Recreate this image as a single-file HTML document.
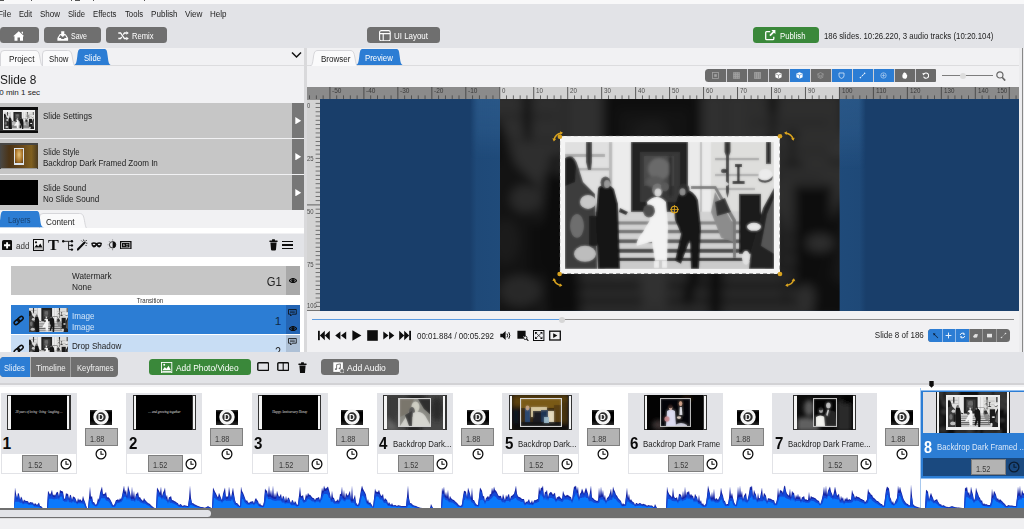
<!DOCTYPE html>
<html lang="en"><head><meta charset="utf-8"><title>Slideshow editor</title><style>
html,body{margin:0;padding:0;}
body{width:1024px;height:529px;overflow:hidden;background:#e2e3e7;font-family:"Liberation Sans", sans-serif;position:relative;}
#app{position:absolute;left:0;top:0;width:1024px;height:529px;overflow:hidden;}
#app div,#app svg,#app .t{position:absolute;box-sizing:border-box;}
#app .t{white-space:nowrap;display:block;}
#app .t span{position:static;}
</style></head><body><div id="app"><div style="left:0px;top:0px;width:1024px;height:4px;background:#f8f8f9;"></div><div style="left:0px;top:0px;width:4px;height:0.8px;background:#555;"></div><div style="left:31px;top:0px;width:1.2px;height:0.8px;background:#555;"></div><div style="left:71px;top:0px;width:1.2px;height:0.8px;background:#555;"></div><div style="left:75px;top:0px;width:5px;height:0.8px;background:#555;"></div><div style="left:93px;top:0px;width:1.2px;height:0.8px;background:#555;"></div><div style="left:144px;top:0px;width:1.2px;height:0.8px;background:#555;"></div><span class="t" style="top:8.84px;font-size:8.4px;line-height:10.92px;color:#1c1c1c;transform:scaleX(0.978);transform-origin:left center;left:-2.2px;">File</span><span class="t" style="top:8.84px;font-size:8.4px;line-height:10.92px;color:#1c1c1c;transform:scaleX(0.900);transform-origin:left center;left:19px;">Edit</span><span class="t" style="top:8.84px;font-size:8.4px;line-height:10.92px;color:#1c1c1c;transform:scaleX(0.955);transform-origin:left center;left:40px;">Show</span><span class="t" style="top:8.84px;font-size:8.4px;line-height:10.92px;color:#1c1c1c;transform:scaleX(0.913);transform-origin:left center;left:68px;">Slide</span><span class="t" style="top:8.84px;font-size:8.4px;line-height:10.92px;color:#1c1c1c;transform:scaleX(0.923);transform-origin:left center;left:93px;">Effects</span><span class="t" style="top:8.84px;font-size:8.4px;line-height:10.92px;color:#1c1c1c;transform:scaleX(0.920);transform-origin:left center;left:125px;">Tools</span><span class="t" style="top:8.84px;font-size:8.4px;line-height:10.92px;color:#1c1c1c;transform:scaleX(0.965);transform-origin:left center;left:150.5px;">Publish</span><span class="t" style="top:8.84px;font-size:8.4px;line-height:10.92px;color:#1c1c1c;transform:scaleX(0.971);transform-origin:left center;left:184.5px;">View</span><span class="t" style="top:8.84px;font-size:8.4px;line-height:10.92px;color:#1c1c1c;transform:scaleX(0.957);transform-origin:left center;left:209.5px;">Help</span><div style="left:0px;top:27px;width:39px;height:16.3px;background:#6f6f6f;border-radius:3.5px;"></div><div style="left:44px;top:27px;width:56.5px;height:16.3px;background:#6f6f6f;border-radius:3.5px;"></div><div style="left:105.5px;top:27px;width:61px;height:16.3px;background:#6f6f6f;border-radius:3.5px;"></div><div style="left:367px;top:27px;width:73px;height:16.3px;background:#6f6f6f;border-radius:3.5px;"></div><div style="left:752.6px;top:27px;width:66.4px;height:16.3px;background:#3a883a;border-radius:3.5px;"></div><svg style="left:12.5px;top:30.5px;" width="11.5" height="10" viewBox="0 0 11.5 10"><path d="M5.75 0.3 L11.3 5.2 L10 5.2 L10 9.8 L7 9.8 L7 6.5 L4.5 6.5 L4.5 9.8 L1.5 9.8 L1.5 5.2 L0.2 5.2 Z M8.6 0.8 h1.4 v2.2 l-1.4 -1.2z" fill="#fff"/></svg><svg style="left:57px;top:30.5px;" width="11.5" height="10" viewBox="0 0 11.5 10"><path d="M4.2 0.3 h3.1 v2.6 h1.9 L5.75 6 L2.3 2.9 h1.9z" fill="#fff"/><path d="M2.6 3.6 L0.4 6.9 V9.7 H11.1 V6.9 L8.9 3.6 L8.1 4.3 L9.7 6.9 H7.6 L7 8 H4.5 L3.9 6.9 H1.8 L3.4 4.3z" fill="#fff"/></svg><span class="t" style="top:30.94px;font-size:8.4px;line-height:10.92px;color:#fff;transform:scaleX(0.838);transform-origin:left center;left:71.4px;">Save</span><svg style="left:118px;top:31px;" width="11" height="9.5" viewBox="0 0 11 9.5"><path d="M0.3 2 H2.6 L6.4 7.5 H8.6 M0.3 7.5 H2.6 L3.7 5.9 M5.3 3.6 L6.4 2 H8.6" fill="none" stroke="#fff" stroke-width="1.3"/><path d="M8.3 0.2 L10.8 2 L8.3 3.8z M8.3 5.7 L10.8 7.5 L8.3 9.3z" fill="#fff"/></svg><span class="t" style="top:30.94px;font-size:8.4px;line-height:10.92px;color:#fff;transform:scaleX(0.906);transform-origin:left center;left:132.4px;">Remix</span><svg style="left:379px;top:29.7px;" width="12" height="11.5" viewBox="0 0 12 11.5"><rect x="0.6" y="0.6" width="10.6" height="10.2" rx="1.6" fill="none" stroke="#fff" stroke-width="1.1"/><path d="M0.6 3.6 H11.2 M4.2 3.6 V10.8" stroke="#fff" stroke-width="1.1" fill="none"/></svg><span class="t" style="top:30.94px;font-size:8.4px;line-height:10.92px;color:#fff;transform:scaleX(0.948);transform-origin:left center;left:393.7px;">UI Layout</span><svg style="left:765px;top:30.3px;" width="10.5" height="10.5" viewBox="0 0 10.5 10.5"><path d="M5.2 1.6 H1.6 Q0.7 1.6 0.7 2.5 V8.8 Q0.7 9.7 1.6 9.7 H7.9 Q8.8 9.7 8.8 8.8 V6.8" fill="none" stroke="#fff" stroke-width="1.3"/><path d="M6.4 0 H10.4 V4 L9 2.7 L5.6 6.2 L4.3 4.9 L7.8 1.4z" fill="#fff"/></svg><span class="t" style="top:30.94px;font-size:8.4px;line-height:10.92px;color:#fff;transform:scaleX(0.928);transform-origin:left center;left:780px;">Publish</span><span class="t" style="top:30.94px;font-size:8.4px;line-height:10.92px;color:#222;transform:scaleX(0.933);transform-origin:left center;left:824px;">186 slides. 10:26.220, 3 audio tracks (10:20.104)</span><div style="left:0px;top:47.5px;width:304px;height:304.5px;background:#f1f1f3;"></div><div style="left:0px;top:65px;width:304px;height:1px;background:#dcdcde;"></div><div style="left:304px;top:47.5px;width:3px;height:304.5px;background:#d9d9db;"></div><div style="left:307px;top:47.5px;width:713px;height:304.5px;background:#f1f1f3;"></div><div style="left:307px;top:65px;width:713px;height:1px;background:#dcdcde;"></div><div style="left:1019.3px;top:47.5px;width:4.7px;height:304.5px;background:#ececee;"></div><div style="left:1021.6px;top:47.5px;width:1.6px;height:304px;background:#888888;"></div><svg style="left:0px;top:49.5px;" width="43" height="16" viewBox="0 0 43 16"><path d="M0.5 16.0 V4 Q0.5 0.5 4 0.5 H35 C38 0.5 39 2 40 8.0 C41 14.0 41.5 16.0 43 16.0" fill="#fafafb" stroke="#d2d2d6" stroke-width="0.9"/></svg><span class="t" style="top:53.74px;font-size:8.4px;line-height:10.92px;color:#222;transform:scaleX(0.978);transform-origin:left center;left:8.6px;">Project</span><svg style="left:41.5px;top:49.5px;" width="33.5" height="16" viewBox="0 0 33.5 16"><path d="M0.5 16.0 V4 Q0.5 0.5 4 0.5 H25.5 C28.5 0.5 29.5 2 30.5 8.0 C31.5 14.0 32.0 16.0 33.5 16.0" fill="#fafafb" stroke="#d2d2d6" stroke-width="0.9"/></svg><span class="t" style="top:53.74px;font-size:8.4px;line-height:10.92px;color:#222;transform:scaleX(0.931);transform-origin:left center;left:48.7px;">Show</span><svg style="left:72.6px;top:48.5px;" width="39" height="16" viewBox="0 0 39 16"><path d="M0 16.0 C3 16.0 3.5 14.0 4.3 7.2 C5 1.2 5.5 0 8 0 H31.0 C33.5 0 34.0 1.2 34.7 7.2 C35.5 14.0 36.0 16.0 39.0 16.0 Z" fill="#2c7dd4"/></svg><span class="t" style="top:52.74px;font-size:8.4px;line-height:10.92px;color:#fff;transform:scaleX(0.913);transform-origin:left center;left:83.6px;">Slide</span><svg style="left:291px;top:51px;" width="11" height="8" viewBox="0 0 11 8"><path d="M1 1.5 L5.5 6 L10 1.5" fill="none" stroke="#111" stroke-width="1.5"/></svg><svg width="0" height="0" style="left:0;top:0"><defs>
<filter id="b1" x="-10%" y="-10%" width="120%" height="120%"><feGaussianBlur stdDeviation="0.9"/></filter>
<filter id="b3" x="-20%" y="-20%" width="140%" height="140%"><feGaussianBlur stdDeviation="2"/></filter>
<filter id="b8" x="-10%" y="-10%" width="120%" height="120%"><feGaussianBlur stdDeviation="5"/></filter>
<g id="photoraw">
<rect x="0" y="0" width="209" height="127" fill="#c4c4c4"/>
<g>
<rect x="0" y="0" width="66" height="72" fill="#e0e0e0"/>
<rect x="0" y="12" width="40" height="3" fill="#a9a9a9"/>
<rect x="8" y="26" width="36" height="2.5" fill="#b4b4b4"/>
<rect x="44" y="0" width="3" height="70" fill="#b9b9b9"/>
<rect x="48" y="0" width="17" height="70" fill="#ececec"/>
<rect x="123" y="0" width="26" height="74" fill="#ebebeb"/>
<rect x="135" y="0" width="2" height="70" fill="#bdbdbd"/>
<rect x="146" y="0" width="63" height="70" fill="#dededc"/>
<rect x="150" y="16" width="44" height="2.2" fill="#a6a6a6"/>
<rect x="150" y="32" width="44" height="2.2" fill="#adadad"/>
<rect x="150" y="46" width="40" height="2.2" fill="#b0b0b0"/>
<rect x="201" y="0" width="5" height="22" fill="#2e2e2e"/>
<rect x="0" y="70" width="209" height="57" fill="#b4b4b4"/>
<rect x="50" y="70" width="144" height="50" fill="#d2d2d2"/>
<rect x="52" y="79.5" width="140" height="3.2" fill="#858585"/>
<rect x="52" y="88" width="140" height="3.4" fill="#707070"/>
<rect x="52" y="97.5" width="140" height="3.8" fill="#5a5a5a"/>
<rect x="52" y="107" width="140" height="4" fill="#454545"/>
<rect x="48" y="116" width="146" height="3.2" fill="#303030"/>
<rect x="40" y="119.4" width="160" height="8" fill="#cbcbcb"/>
<rect x="66" y="0" width="57" height="70" fill="#232323"/>
<rect x="75" y="10" width="40" height="50" fill="#383838"/>
<rect x="79" y="14" width="30" height="30" fill="#4c4c4c"/>
<g filter="url(#b1)"><ellipse cx="94" cy="27" rx="11" ry="11" fill="#6a6a6a"/><ellipse cx="90" cy="40" rx="9" ry="6" fill="#5a5a5a"/><rect x="104" y="14" width="3" height="40" fill="#2a2a2a"/></g>
<path d="M21 0 h6 v20 l-1 8 h-3 l-2 -8z" fill="#3a3a3a"/>
<path d="M159.5 0 h6 v10 l-1.5 4 v36 l-1.5 6 l-1.5 -6 v-36 l-1.5 -4z" fill="#333"/>
<ellipse cx="159" cy="29" rx="3" ry="2.2" fill="#3a3a3a"/>
<path d="M126 44 H151 L171 78 V116 H168 V80 L149.5 47 H126z" fill="#777"/>
<path d="M150 50 L168 82 V100 L156 96 L146 70z" fill="#8c8c8c"/>
<path d="M0 16 Q9 10 13 24 L18 40 L30 52 L32 127 L0 127z" fill="#3e3e3e"/>
<path d="M0 16 Q8 12 11 24 L10 40 L0 44z" fill="#1e1e1e"/>
<ellipse cx="23" cy="60" rx="8" ry="7" fill="#c9c9c9"/>
<ellipse cx="12" cy="84" rx="7" ry="12" fill="#6e6e6e"/>
<ellipse cx="20" cy="112" rx="11" ry="8" fill="#bdbdbd"/>
<rect x="24" y="74" width="8" height="30" fill="#1d1d1d"/>
<path d="M33 46 Q41 38 49 47 L53 62 L55 127 L33 127 L31 72z" fill="#151515"/>
<ellipse cx="40.5" cy="40.5" rx="5" ry="6" fill="#4a4a4a"/>
<ellipse cx="42" cy="42" rx="3" ry="4" fill="#9a9a9a"/>
<path d="M55 66 l8 4 l-2 3 l-7 -3z" fill="#222"/>
<path d="M82 60 Q92 50 101 60 L103 84 L102 119 L90 119 L87 100 L72 104 Q70 100 78 90 L85 78z" fill="#f3f3f3"/>
<ellipse cx="92.5" cy="48" rx="5.5" ry="6.5" fill="#777"/>
<ellipse cx="93" cy="50.5" rx="3.4" ry="4" fill="#d8d8d8"/>
<ellipse cx="84" cy="69" rx="6" ry="6.5" fill="#4e4e4e"/>
<rect x="89" y="119" width="5" height="7" fill="#eee"/><rect x="97" y="119" width="5" height="7" fill="#eee"/>
<path d="M115 50 Q126 44 133 58 L136 86 L134 127 L126 127 L125 98 L116 122 L110 119 L116 92 L110 78 Q108 64 115 50z" fill="#181818"/>
<ellipse cx="119" cy="47" rx="5.5" ry="5.5" fill="#2e2e2e"/>
<ellipse cx="117.5" cy="50" rx="3" ry="3.6" fill="#8e8e8e"/>
<ellipse cx="100" cy="45" rx="4" ry="4.5" fill="#5a5a5a"/>
<rect x="174" y="52" width="22" height="60" fill="#1b1b1b"/>
<path d="M209 46 L198 66 L186 108 L184 127 L209 127z" fill="#222"/>
<path d="M209 56 L202 72 L196 104 L209 112z" fill="#575757"/>
<ellipse cx="200.5" cy="33" rx="7" ry="6" fill="#ececec"/>
<path d="M193 36 q8 6 15 -2 l-1 4 q-6 5 -13 1z" fill="#333"/>
<path d="M170 22 h7 v3 h-2.4 v14 h5 v3 h-12 v-3 h4.6 v-14 h-2.2z" fill="#2a2a2a"/>
<ellipse cx="189" cy="85" rx="7" ry="4" fill="#e6e6e6"/>
<ellipse cx="181" cy="116" rx="4" ry="7" fill="#e2e2e2"/>
<path d="M150 60 L160 56 L166 70 L152 74z" fill="#333"/>
<path d="M150 38 q8 -2 14 4 l-2 2 q-6 -4 -12 -3z" fill="#ddd"/>
</g></g>
<g id="photo"><use href="#photoraw" filter="url(#b1)"/><use href="#photoraw" opacity="0.45"/></g>
</defs></svg><span class="t" style="top:71.94px;font-size:12.4px;line-height:16.12px;color:#1c1c1c;transform:scaleX(0.958);transform-origin:left center;left:-0.3px;">Slide 8</span><span class="t" style="top:88.3px;font-size:8px;line-height:10.4px;color:#1c1c1c;left:-0.8px;">0 min 1 sec</span><div style="left:0px;top:102.8px;width:291.5px;height:34.8px;background:#c6c6c6;"></div><div style="left:291.5px;top:102.8px;width:12.5px;height:34.8px;background:#777777;"></div><svg style="left:294.5px;top:116.5px;" width="7" height="7.4" viewBox="0 0 7 7.4"><path d="M0.3 0 L6.2 3.7 L0.3 7.4z" fill="#fff"/></svg><div style="left:0px;top:139.2px;width:291.5px;height:34.6px;background:#c6c6c6;"></div><div style="left:291.5px;top:139.2px;width:12.5px;height:34.6px;background:#777777;"></div><svg style="left:294.5px;top:152.8px;" width="7" height="7.4" viewBox="0 0 7 7.4"><path d="M0.3 0 L6.2 3.7 L0.3 7.4z" fill="#fff"/></svg><div style="left:0px;top:175.2px;width:291.5px;height:34.6px;background:#c6c6c6;"></div><div style="left:291.5px;top:175.2px;width:12.5px;height:34.6px;background:#777777;"></div><svg style="left:294.5px;top:188.8px;" width="7" height="7.4" viewBox="0 0 7 7.4"><path d="M0.3 0 L6.2 3.7 L0.3 7.4z" fill="#fff"/></svg><div style="left:0px;top:107.4px;width:38.3px;height:26px;background:#0c0c0c;"></div><div style="left:0px;top:109.8px;width:38.3px;height:21px;background:#303030;"></div><div style="left:2.8px;top:110.3px;width:32.4px;height:19.6px;background:#f0f0f0;"></div><svg preserveAspectRatio="none" style="left:4px;top:111.6px;overflow:hidden;" width="30" height="17" viewBox="0 0 209 127"><use href="#photo"/></svg><div style="left:0px;top:143.3px;width:38.3px;height:26.2px;background:#474644;"></div><div style="left:0.8px;top:145px;width:37px;height:22.6px;background:#4a3418;background:linear-gradient(90deg,#4a4640 0%,#4b3315 22%,#6a4a1c 60%,#80601f 82%,#4a3a20 100%);"></div><div style="left:0.8px;top:167.6px;width:36.5px;height:0.9px;background:#9a9a9a;"></div><div style="left:13.8px;top:148px;width:10.6px;height:16.5px;background:#dde4ec;"></div><div style="left:15px;top:149.3px;width:8.2px;height:13.6px;background:#b98a3c;background:radial-gradient(ellipse at 50% 40%,#e5c27a 0%,#b07a2c 55%,#5a3a18 100%);"></div><div style="left:0px;top:179.8px;width:38.2px;height:25.4px;background:#000;"></div><span class="t" style="top:110.74px;font-size:8.4px;line-height:10.92px;color:#222;transform:scaleX(0.957);transform-origin:left center;left:43px;">Slide Settings</span><span class="t" style="top:147.04px;font-size:8.4px;line-height:10.92px;color:#222;transform:scaleX(0.927);transform-origin:left center;left:43px;">Slide Style</span><span class="t" style="top:157.94px;font-size:8.4px;line-height:10.92px;color:#222;transform:scaleX(0.960);transform-origin:left center;left:43px;">Backdrop Dark Framed Zoom In</span><span class="t" style="top:182.74px;font-size:8.4px;line-height:10.92px;color:#222;transform:scaleX(0.956);transform-origin:left center;left:43px;">Slide Sound</span><span class="t" style="top:193.94px;font-size:8.4px;line-height:10.92px;color:#222;transform:scaleX(0.966);transform-origin:left center;left:43px;">No Slide Sound</span><svg style="left:38.5px;top:212.5px;" width="48.5" height="15.5" viewBox="0 0 48.5 15.5"><path d="M0.5 15.5 V4 Q0.5 0.5 4 0.5 H40.5 C43.5 0.5 44.5 2 45.5 7.75 C46.5 13.5 47.0 15.5 48.5 15.5" fill="#fafafb" stroke="#d2d2d6" stroke-width="0.9"/></svg><span class="t" style="top:216.84px;font-size:8.4px;line-height:10.92px;color:#222;transform:scaleX(0.975);transform-origin:left center;left:46.4px;">Content</span><svg style="left:-4.5px;top:211.3px;" width="48.3" height="16.3" viewBox="0 0 48.3 16.3"><path d="M0 16.299999999999983 C3 16.299999999999983 3.5 14.299999999999983 4.3 7.334999999999993 C5 1.2 5.5 0 8 0 H40.3 C42.8 0 43.3 1.2 44.0 7.334999999999993 C44.8 14.299999999999983 45.3 16.299999999999983 48.3 16.299999999999983 Z" fill="#2c7dd4"/></svg><span class="t" style="top:215.44px;font-size:8.4px;line-height:10.92px;color:#17406f;transform:scaleX(0.899);transform-origin:left center;left:8.4px;">Layers</span><div style="left:0px;top:227.5px;width:304px;height:1px;background:#dcdcde;"></div><div style="left:0px;top:228.3px;width:304px;height:5.2px;background:#ffffff;"></div><div style="left:0px;top:233.5px;width:304px;height:23px;background:#e2e3e7;"></div><div style="left:0px;top:256.5px;width:304px;height:95.5px;background:#fff;"></div><svg style="left:1.6px;top:239.7px;" width="10.2" height="10.6" viewBox="0 0 10.2 10.6"><rect x="0" y="0" width="10.2" height="10.6" rx="1.8" fill="#0d0d0d"/><path d="M5.1 2.2 V8.4 M2 5.3 H8.2" stroke="#fff" stroke-width="1.9"/></svg><span class="t" style="top:239.76px;font-size:9.6px;line-height:12.48px;color:#333;transform:scaleX(0.837);transform-origin:left center;left:15.6px;">add</span><svg style="left:33.2px;top:238.8px;" width="10.8" height="12" viewBox="0 0 10.8 12"><rect x="0.5" y="0.5" width="9.8" height="11" fill="#f4f4f4" stroke="#0d0d0d" stroke-width="1"/><path d="M1.3 8.6 L3.6 5.6 L5.2 7.4 L7.3 4.4 L9.5 8.6z" fill="#0d0d0d"/><circle cx="3" cy="3.3" r="1.1" fill="#0d0d0d"/><rect x="1" y="9.4" width="8.8" height="1" fill="#999"/></svg><span class="t" style="top:234.925px;font-size:15.5px;line-height:20.15px;color:#0d0d0d;font-weight:bold;transform:scaleX(1.044);transform-origin:left center;left:47.6px;font-family:&quot;Liberation Serif&quot;,serif;">T</span><svg style="left:62px;top:239.5px;" width="11.5" height="11.5" viewBox="0 0 11.5 11.5"><path d="M1 1.3 H6.6 V9.6 H9 M6.6 5.4 H9 M6.6 1.3 H9" fill="none" stroke="#0d0d0d" stroke-width="0.9"/><circle cx="1.2" cy="1.3" r="1.2" fill="#0d0d0d"/><circle cx="9.9" cy="1.3" r="1.2" fill="#0d0d0d"/><circle cx="9.9" cy="5.4" r="1.2" fill="#0d0d0d"/><circle cx="9.9" cy="9.6" r="1.2" fill="#0d0d0d"/></svg><svg style="left:76.6px;top:239.3px;" width="11" height="11.5" viewBox="0 0 11 11.5"><path d="M0.8 10.6 L7.6 3.6" stroke="#0d0d0d" stroke-width="2.1" stroke-linecap="round"/><path d="M6.5 0.6 L7 2 M9.6 1 L8.7 2.2 M10.4 4.2 L9 4.2 M9.6 7 L8.6 6 M4.4 1.6 L5.4 2.6" stroke="#0d0d0d" stroke-width="0.9"/></svg><svg style="left:91.2px;top:242.2px;" width="11.2" height="5.8" viewBox="0 0 11.2 5.8"><path d="M0.2 1 Q2.8 -0.4 5.6 1 Q8.4 -0.4 11 1 Q11 4.2 8.6 5.4 Q6.6 5.6 5.6 3.4 Q4.6 5.6 2.6 5.4 Q0.2 4.2 0.2 1z" fill="#0d0d0d"/><ellipse cx="3" cy="2.5" rx="1.3" ry="0.8" fill="#e7e7ea"/><ellipse cx="8.2" cy="2.5" rx="1.3" ry="0.8" fill="#e7e7ea"/></svg><svg style="left:106.5px;top:239.3px;" width="10" height="11.6" viewBox="0 0 10 11.6"><path d="M5.6 2.6 A3.2 3.2 0 0 1 5.6 9 z" fill="#0d0d0d"/><circle cx="5.6" cy="5.8" r="3.2" fill="none" stroke="#0d0d0d" stroke-width="0.8"/><path d="M5.6 0.3 V1.6 M5.6 10 V11.3 M0.6 5.8 H1.6 M1.8 2 L2.7 2.9 M1.8 9.6 L2.7 8.7" stroke="#777" stroke-width="0.7"/></svg><svg style="left:120px;top:240.8px;" width="11.5" height="8.5" viewBox="0 0 11.5 8.5"><rect x="0.6" y="0.6" width="10.3" height="7.3" fill="#e7e7ea" stroke="#0d0d0d" stroke-width="1.3"/><rect x="2" y="2" width="7.5" height="4.5" fill="#0d0d0d"/><path d="M3 4.6 H5 M6 3.4 H8.4 M3 3.4 H4.6 M6 5.2 H8" stroke="#ddd" stroke-width="0.6"/></svg><svg style="left:268.8px;top:239px;" width="9" height="11.6" viewBox="0 0 9 11.6"><path d="M1.4 3.6 H7.6 L7 10.6 Q7 11.4 6.2 11.4 H2.8 Q2 11.4 2 10.6z" fill="#0d0d0d"/><rect x="0.4" y="1.6" width="8.2" height="1.5" rx="0.5" fill="#0d0d0d"/><rect x="3" y="0.3" width="3" height="1.6" rx="0.5" fill="#0d0d0d"/></svg><div style="left:282.3px;top:240.95px;width:11px;height:1.5px;background:#0d0d0d;"></div><div style="left:282.3px;top:244.45px;width:11px;height:1.5px;background:#0d0d0d;"></div><div style="left:282.3px;top:247.95px;width:11px;height:1.5px;background:#0d0d0d;"></div><div style="left:10.8px;top:266.3px;width:275.2px;height:28.7px;background:#c6c6c6;"></div><div style="left:286px;top:266.3px;width:13.6px;height:28.7px;background:#a9a9a9;"></div><span class="t" style="top:271.34px;font-size:8.4px;line-height:10.92px;color:#222;transform:scaleX(0.972);transform-origin:left center;left:72.2px;">Watermark</span><span class="t" style="top:282.14px;font-size:8.4px;line-height:10.92px;color:#222;transform:scaleX(0.988);transform-origin:left center;left:72.2px;">None</span><span class="t" style="top:274.31px;font-size:12.6px;line-height:16.38px;color:#222;transform:scaleX(0.892);transform-origin:right center;right:742.7px;">G1</span><svg style="left:288.8px;top:278.2px;" width="8" height="5.2" viewBox="0 0 8 5.2"><path d="M0.2 2.6 Q4 -1.6 7.8 2.6 Q4 6.8 0.2 2.6z" fill="none" stroke="#0d0d0d" stroke-width="1.15"/><circle cx="4" cy="2.6" r="1.7" fill="#0d0d0d"/></svg><span class="t" style="top:297.21px;font-size:6.6px;line-height:8.58px;color:#333;transform:scaleX(0.923);transform-origin:center center;left:-50.2px;width:400px;text-align:center;"><span>Transition</span></span><div style="left:10.8px;top:305.4px;width:275.2px;height:29.1px;background:#2c7dd4;"></div><div style="left:286px;top:305.4px;width:13.6px;height:29.1px;background:#2465b4;"></div><svg style="left:13px;top:314.5px;" width="11.4" height="11" viewBox="0 0 11.4 11"><g fill="none" stroke="#0d0d0d" stroke-width="1.5"><rect x="0.9" y="5.2" width="6" height="3.6" rx="1.8" transform="rotate(-40 3.9 7)"/><rect x="4.4" y="2.2" width="6" height="3.6" rx="1.8" transform="rotate(-40 7.4 4)"/></g></svg><svg preserveAspectRatio="none" style="left:28.7px;top:308px;overflow:hidden;" width="39.2" height="24" viewBox="0 0 209 127"><use href="#photo"/></svg><span class="t" style="top:310.84px;font-size:8.4px;line-height:10.92px;color:#d6e6f7;transform:scaleX(0.962);transform-origin:left center;left:72.2px;">Image</span><span class="t" style="top:321.54px;font-size:8.4px;line-height:10.92px;color:#d6e6f7;transform:scaleX(0.962);transform-origin:left center;left:72.2px;">Image</span><span class="t" style="top:314.03px;font-size:11.8px;line-height:15.34px;color:#0f2a4a;right:742.8px;">1</span><svg style="left:288.3px;top:308.6px;" width="9" height="7.4" viewBox="0 0 9 7.4"><path d="M0.5 0.5 H8.3 V5.2 H4.4 L2.6 7 V5.2 H0.5z" fill="none" stroke="#0d0d0d" stroke-width="0.8"/><path d="M2 2.2 H6.8 M2 3.6 H6.8" stroke="#0d0d0d" stroke-width="0.6"/></svg><svg style="left:288.8px;top:325.5px;" width="8" height="5.2" viewBox="0 0 8 5.2"><path d="M0.2 2.6 Q4 -1.6 7.8 2.6 Q4 6.8 0.2 2.6z" fill="none" stroke="#0d0d0d" stroke-width="1.15"/><circle cx="4" cy="2.6" r="1.7" fill="#0d0d0d"/></svg><div style="left:10.8px;top:334.5px;width:275.2px;height:17.5px;background:#c8ddf4;"></div><div style="left:286px;top:334.5px;width:13.6px;height:17.5px;background:#adc0d6;"></div><svg style="left:13px;top:344px;" width="11.4" height="11" viewBox="0 0 11.4 11"><g fill="none" stroke="#0d0d0d" stroke-width="1.5"><rect x="0.9" y="5.2" width="6" height="3.6" rx="1.8" transform="rotate(-40 3.9 7)"/><rect x="4.4" y="2.2" width="6" height="3.6" rx="1.8" transform="rotate(-40 7.4 4)"/></g></svg><svg preserveAspectRatio="none" style="left:28.7px;top:337px;overflow:hidden;" width="39.2" height="24" viewBox="0 0 209 127"><use href="#photo"/></svg><span class="t" style="top:340.74px;font-size:8.4px;line-height:10.92px;color:#222;transform:scaleX(0.971);transform-origin:left center;left:72.2px;">Drop Shadow</span><span class="t" style="top:343.51px;font-size:12.6px;line-height:16.38px;color:#222;transform:scaleX(0.855);transform-origin:right center;right:742.5px;">2</span><svg style="left:288.3px;top:338.4px;" width="9" height="7.4" viewBox="0 0 9 7.4"><path d="M0.5 0.5 H8.3 V5.2 H4.4 L2.6 7 V5.2 H0.5z" fill="none" stroke="#0d0d0d" stroke-width="0.8"/><path d="M2 2.2 H6.8 M2 3.6 H6.8" stroke="#0d0d0d" stroke-width="0.6"/></svg><svg style="left:309.5px;top:49.5px;" width="48" height="16" viewBox="0 0 48 16"><path d="M0 16.0 C2 16.0 2.5 14.0 3.3 8.0 C4 2 5 0.5 8 0.5 H40.0 C43.0 0.5 44.0 2 45.0 8.0 C46.0 14.0 46.5 16.0 48.0 16.0" fill="#fafafb" stroke="#d2d2d6" stroke-width="0.9"/></svg><span class="t" style="top:53.74px;font-size:8.4px;line-height:10.92px;color:#222;transform:scaleX(0.960);transform-origin:left center;left:320.6px;">Browser</span><svg style="left:354.5px;top:48.5px;" width="49" height="16" viewBox="0 0 49 16"><path d="M0 16.0 C3 16.0 3.5 14.0 4.3 7.2 C5 1.2 5.5 0 8 0 H41.0 C43.5 0 44.0 1.2 44.7 7.2 C45.5 14.0 46.0 16.0 49.0 16.0 Z" fill="#2c7dd4"/></svg><span class="t" style="top:52.74px;font-size:8.4px;line-height:10.92px;color:#fff;transform:scaleX(0.933);transform-origin:left center;left:364.6px;">Preview</span><div style="left:705.4px;top:69.4px;width:230.8px;height:12.6px;background:#6b6b6b;border-radius:3.5px 1px 1px 3.5px;overflow:hidden;"></div><div style="left:789.327px;top:69.4px;width:20.9818px;height:12.6px;background:#2c7dd4;"></div><div style="left:831.291px;top:69.4px;width:20.9818px;height:12.6px;background:#2c7dd4;"></div><div style="left:852.273px;top:69.4px;width:20.9818px;height:12.6px;background:#2c7dd4;"></div><div style="left:873.255px;top:69.4px;width:20.9818px;height:12.6px;background:#2c7dd4;"></div><div style="left:725.882px;top:69.4px;width:1px;height:12.6px;background:#cfcfd3;"></div><div style="left:746.864px;top:69.4px;width:1px;height:12.6px;background:#cfcfd3;"></div><div style="left:767.845px;top:69.4px;width:1px;height:12.6px;background:#cfcfd3;"></div><div style="left:788.827px;top:69.4px;width:1px;height:12.6px;background:#cfcfd3;"></div><div style="left:809.809px;top:69.4px;width:1px;height:12.6px;background:#cfcfd3;"></div><div style="left:830.791px;top:69.4px;width:1px;height:12.6px;background:#cfcfd3;"></div><div style="left:851.773px;top:69.4px;width:1px;height:12.6px;background:#cfcfd3;"></div><div style="left:872.755px;top:69.4px;width:1px;height:12.6px;background:#cfcfd3;"></div><div style="left:893.736px;top:69.4px;width:1px;height:12.6px;background:#cfcfd3;"></div><div style="left:914.718px;top:69.4px;width:1px;height:12.6px;background:#cfcfd3;"></div><svg style="left:712.391px;top:72.2px;" width="7" height="7" viewBox="0 0 7 7"><rect x="0.5" y="0.5" width="6" height="6" fill="none" stroke="#a2a2a2" stroke-width="0.8"/><rect x="2.2" y="2.2" width="2.6" height="2.6" fill="#a2a2a2"/></svg><svg style="left:733.373px;top:72.2px;" width="7" height="7" viewBox="0 0 7 7"><path d="M0.4 0.4 H6.6 V6.6 H0.4z M0.4 2.5 H6.6 M0.4 4.5 H6.6 M2.5 0.4 V6.6 M4.5 0.4 V6.6" fill="#8e8e8e" stroke="#a2a2a2" stroke-width="0.7"/></svg><svg style="left:754.355px;top:72.2px;" width="7" height="7" viewBox="0 0 7 7"><path d="M0.4 0.4 H6.6 V6.6 H0.4z M2.5 0.4 V6.6 M4.5 0.4 V6.6" fill="#8e8e8e" stroke="#a2a2a2" stroke-width="0.8"/></svg><svg style="left:775.336px;top:72.2px;" width="7" height="7" viewBox="0 0 7 7"><path d="M3.5 0.2 L6.6 1.6 V5.2 L3.5 6.8 L0.4 5.2 V1.6z" fill="#fff"/><path d="M0.8 1.9 L3.5 3.2 L6.2 1.9 M3.5 3.2 V6.4" stroke="#6b6b6b" stroke-width="0.6" fill="none"/></svg><svg style="left:796.318px;top:72.2px;" width="7" height="7" viewBox="0 0 7 7"><path d="M3.5 0.2 L6.6 1.6 V5.2 L3.5 6.8 L0.4 5.2 V1.6z" fill="#fff"/><path d="M0.8 1.9 L3.5 3.2 L6.2 1.9 M3.5 3.2 V6.4" stroke="#2c7dd4" stroke-width="0.6" fill="none"/></svg><svg style="left:817.3px;top:72.2px;" width="7" height="7" viewBox="0 0 7 7"><path d="M3.5 0.6 L6.6 2.2 L3.5 3.8 L0.4 2.2z M0.6 3.6 L3.5 5.2 L6.4 3.6 M0.6 4.9 L3.5 6.5 L6.4 4.9" fill="none" stroke="#a2a2a2" stroke-width="0.7"/></svg><svg style="left:838.282px;top:72.2px;" width="7" height="7" viewBox="0 0 7 7"><path d="M1 1 H6 V3.8 Q6 5.8 3.5 6.4 Q1 5.8 1 3.8z" fill="none" stroke="#d6e6f8" stroke-width="0.8"/></svg><svg style="left:859.264px;top:72.2px;" width="7" height="7" viewBox="0 0 7 7"><path d="M1.2 5.8 L5.8 1.2" stroke="#d8e8fa" stroke-width="0.8" stroke-dasharray="1.2 0.8"/><circle cx="1.4" cy="5.6" r="0.8" fill="#e4effb"/><circle cx="5.6" cy="1.4" r="0.8" fill="#e4effb"/><circle cx="3.5" cy="3.5" r="0.7" fill="#e4effb"/></svg><svg style="left:880.245px;top:72.2px;" width="7" height="7" viewBox="0 0 7 7"><circle cx="3.5" cy="3.5" r="2.7" fill="none" stroke="#b9d4f3" stroke-width="0.7"/><path d="M3.5 1.6 V5.4 M1.6 3.5 H5.4" stroke="#b9d4f3" stroke-width="0.6"/></svg><svg style="left:901.227px;top:72.2px;" width="7" height="7" viewBox="0 0 7 7"><path d="M1.4 3 Q1.4 2.2 2.2 2.4 V1 Q2.8 0.4 3.2 1 V0.6 Q3.9 0 4.3 0.8 V1.2 Q5 0.8 5.3 1.6 V2.6 Q6.2 2.4 6.2 3.4 Q6.2 6.8 3.8 6.8 Q1.4 6.8 1.4 5z" fill="#fff"/></svg><svg style="left:922.209px;top:72.2px;" width="7" height="7" viewBox="0 0 7 7"><path d="M1.6 4.6 A2.6 2.6 0 1 0 2 2" fill="none" stroke="#fff" stroke-width="1.1"/><path d="M0.4 0.9 L3.2 1.4 L1.2 3.6z" fill="#fff"/></svg><div style="left:942px;top:75.4px;width:51px;height:1px;background:#7d7d7d;"></div><div style="left:959.6px;top:72.9px;width:6px;height:6px;background:#dcdcdc;border-radius:3px;"></div><svg style="left:995.8px;top:70.6px;" width="10" height="10.5" viewBox="0 0 10 10.5"><circle cx="3.9" cy="3.9" r="3.1" fill="none" stroke="#666" stroke-width="1.2"/><path d="M6.1 6.2 L9.2 9.6" stroke="#666" stroke-width="1.7"/></svg><div style="left:307px;top:86.5px;width:712.3px;height:12.7px;background:#8b8b8b;"></div><div style="left:500px;top:86.5px;width:339.5px;height:12.7px;background:#d2d2d2;"></div><svg style="left:307px;top:86.5px;" width="712.3" height="12.7" viewBox="0 0 712.3 12.7"><rect x="1.75" y="8.4" width="0.9" height="4.4" fill="#4c4c4c"/><rect x="8.55" y="8.4" width="0.9" height="4.4" fill="#4c4c4c"/><rect x="15.35" y="8.4" width="0.9" height="4.4" fill="#4c4c4c"/><rect x="22.10" y="0" width="1" height="12.8" fill="#4c4c4c"/><rect x="28.95" y="8.4" width="0.9" height="4.4" fill="#4c4c4c"/><rect x="35.75" y="8.4" width="0.9" height="4.4" fill="#4c4c4c"/><rect x="42.55" y="8.4" width="0.9" height="4.4" fill="#4c4c4c"/><rect x="49.35" y="8.4" width="0.9" height="4.4" fill="#4c4c4c"/><rect x="56.10" y="0" width="1" height="12.8" fill="#4c4c4c"/><rect x="62.95" y="8.4" width="0.9" height="4.4" fill="#4c4c4c"/><rect x="69.75" y="8.4" width="0.9" height="4.4" fill="#4c4c4c"/><rect x="76.55" y="8.4" width="0.9" height="4.4" fill="#4c4c4c"/><rect x="83.35" y="8.4" width="0.9" height="4.4" fill="#4c4c4c"/><rect x="90.10" y="0" width="1" height="12.8" fill="#4c4c4c"/><rect x="96.95" y="8.4" width="0.9" height="4.4" fill="#4c4c4c"/><rect x="103.75" y="8.4" width="0.9" height="4.4" fill="#4c4c4c"/><rect x="110.55" y="8.4" width="0.9" height="4.4" fill="#4c4c4c"/><rect x="117.35" y="8.4" width="0.9" height="4.4" fill="#4c4c4c"/><rect x="124.10" y="0" width="1" height="12.8" fill="#4c4c4c"/><rect x="130.95" y="8.4" width="0.9" height="4.4" fill="#4c4c4c"/><rect x="137.75" y="8.4" width="0.9" height="4.4" fill="#4c4c4c"/><rect x="144.55" y="8.4" width="0.9" height="4.4" fill="#4c4c4c"/><rect x="151.35" y="8.4" width="0.9" height="4.4" fill="#4c4c4c"/><rect x="158.10" y="0" width="1" height="12.8" fill="#4c4c4c"/><rect x="164.95" y="8.4" width="0.9" height="4.4" fill="#4c4c4c"/><rect x="171.75" y="8.4" width="0.9" height="4.4" fill="#4c4c4c"/><rect x="178.55" y="8.4" width="0.9" height="4.4" fill="#4c4c4c"/><rect x="185.35" y="8.4" width="0.9" height="4.4" fill="#4c4c4c"/><rect x="192.10" y="0" width="1" height="12.8" fill="#5a5a5a"/><rect x="198.95" y="8.4" width="0.9" height="4.4" fill="#5a5a5a"/><rect x="205.75" y="8.4" width="0.9" height="4.4" fill="#5a5a5a"/><rect x="212.55" y="8.4" width="0.9" height="4.4" fill="#5a5a5a"/><rect x="219.35" y="8.4" width="0.9" height="4.4" fill="#5a5a5a"/><rect x="226.10" y="0" width="1" height="12.8" fill="#5a5a5a"/><rect x="232.95" y="8.4" width="0.9" height="4.4" fill="#5a5a5a"/><rect x="239.75" y="8.4" width="0.9" height="4.4" fill="#5a5a5a"/><rect x="246.55" y="8.4" width="0.9" height="4.4" fill="#5a5a5a"/><rect x="253.35" y="8.4" width="0.9" height="4.4" fill="#5a5a5a"/><rect x="260.10" y="0" width="1" height="12.8" fill="#5a5a5a"/><rect x="266.95" y="8.4" width="0.9" height="4.4" fill="#5a5a5a"/><rect x="273.75" y="8.4" width="0.9" height="4.4" fill="#5a5a5a"/><rect x="280.55" y="8.4" width="0.9" height="4.4" fill="#5a5a5a"/><rect x="287.35" y="8.4" width="0.9" height="4.4" fill="#5a5a5a"/><rect x="294.10" y="0" width="1" height="12.8" fill="#5a5a5a"/><rect x="300.95" y="8.4" width="0.9" height="4.4" fill="#5a5a5a"/><rect x="307.75" y="8.4" width="0.9" height="4.4" fill="#5a5a5a"/><rect x="314.55" y="8.4" width="0.9" height="4.4" fill="#5a5a5a"/><rect x="321.35" y="8.4" width="0.9" height="4.4" fill="#5a5a5a"/><rect x="328.10" y="0" width="1" height="12.8" fill="#5a5a5a"/><rect x="334.95" y="8.4" width="0.9" height="4.4" fill="#5a5a5a"/><rect x="341.75" y="8.4" width="0.9" height="4.4" fill="#5a5a5a"/><rect x="348.55" y="8.4" width="0.9" height="4.4" fill="#5a5a5a"/><rect x="355.35" y="8.4" width="0.9" height="4.4" fill="#5a5a5a"/><rect x="362.10" y="0" width="1" height="12.8" fill="#5a5a5a"/><rect x="368.95" y="8.4" width="0.9" height="4.4" fill="#5a5a5a"/><rect x="375.75" y="8.4" width="0.9" height="4.4" fill="#5a5a5a"/><rect x="382.55" y="8.4" width="0.9" height="4.4" fill="#5a5a5a"/><rect x="389.35" y="8.4" width="0.9" height="4.4" fill="#5a5a5a"/><rect x="396.10" y="0" width="1" height="12.8" fill="#5a5a5a"/><rect x="402.95" y="8.4" width="0.9" height="4.4" fill="#5a5a5a"/><rect x="409.75" y="8.4" width="0.9" height="4.4" fill="#5a5a5a"/><rect x="416.55" y="8.4" width="0.9" height="4.4" fill="#5a5a5a"/><rect x="423.35" y="8.4" width="0.9" height="4.4" fill="#5a5a5a"/><rect x="430.10" y="0" width="1" height="12.8" fill="#5a5a5a"/><rect x="436.95" y="8.4" width="0.9" height="4.4" fill="#5a5a5a"/><rect x="443.75" y="8.4" width="0.9" height="4.4" fill="#5a5a5a"/><rect x="450.55" y="8.4" width="0.9" height="4.4" fill="#5a5a5a"/><rect x="457.35" y="8.4" width="0.9" height="4.4" fill="#5a5a5a"/><rect x="464.10" y="0" width="1" height="12.8" fill="#5a5a5a"/><rect x="470.95" y="8.4" width="0.9" height="4.4" fill="#5a5a5a"/><rect x="477.75" y="8.4" width="0.9" height="4.4" fill="#5a5a5a"/><rect x="484.55" y="8.4" width="0.9" height="4.4" fill="#5a5a5a"/><rect x="491.35" y="8.4" width="0.9" height="4.4" fill="#5a5a5a"/><rect x="498.10" y="0" width="1" height="12.8" fill="#5a5a5a"/><rect x="504.95" y="8.4" width="0.9" height="4.4" fill="#5a5a5a"/><rect x="511.75" y="8.4" width="0.9" height="4.4" fill="#5a5a5a"/><rect x="518.55" y="8.4" width="0.9" height="4.4" fill="#5a5a5a"/><rect x="525.35" y="8.4" width="0.9" height="4.4" fill="#5a5a5a"/><rect x="532.10" y="0" width="1" height="12.8" fill="#4c4c4c"/><rect x="538.95" y="8.4" width="0.9" height="4.4" fill="#4c4c4c"/><rect x="545.75" y="8.4" width="0.9" height="4.4" fill="#4c4c4c"/><rect x="552.55" y="8.4" width="0.9" height="4.4" fill="#4c4c4c"/><rect x="559.35" y="8.4" width="0.9" height="4.4" fill="#4c4c4c"/><rect x="566.10" y="0" width="1" height="12.8" fill="#4c4c4c"/><rect x="572.95" y="8.4" width="0.9" height="4.4" fill="#4c4c4c"/><rect x="579.75" y="8.4" width="0.9" height="4.4" fill="#4c4c4c"/><rect x="586.55" y="8.4" width="0.9" height="4.4" fill="#4c4c4c"/><rect x="593.35" y="8.4" width="0.9" height="4.4" fill="#4c4c4c"/><rect x="600.10" y="0" width="1" height="12.8" fill="#4c4c4c"/><rect x="606.95" y="8.4" width="0.9" height="4.4" fill="#4c4c4c"/><rect x="613.75" y="8.4" width="0.9" height="4.4" fill="#4c4c4c"/><rect x="620.55" y="8.4" width="0.9" height="4.4" fill="#4c4c4c"/><rect x="627.35" y="8.4" width="0.9" height="4.4" fill="#4c4c4c"/><rect x="634.10" y="0" width="1" height="12.8" fill="#4c4c4c"/><rect x="640.95" y="8.4" width="0.9" height="4.4" fill="#4c4c4c"/><rect x="647.75" y="8.4" width="0.9" height="4.4" fill="#4c4c4c"/><rect x="654.55" y="8.4" width="0.9" height="4.4" fill="#4c4c4c"/><rect x="661.35" y="8.4" width="0.9" height="4.4" fill="#4c4c4c"/><rect x="668.10" y="0" width="1" height="12.8" fill="#4c4c4c"/><rect x="674.95" y="8.4" width="0.9" height="4.4" fill="#4c4c4c"/><rect x="681.75" y="8.4" width="0.9" height="4.4" fill="#4c4c4c"/><rect x="688.55" y="8.4" width="0.9" height="4.4" fill="#4c4c4c"/><rect x="695.35" y="8.4" width="0.9" height="4.4" fill="#4c4c4c"/><rect x="702.10" y="0" width="1" height="12.8" fill="#4c4c4c"/><rect x="708.95" y="8.4" width="0.9" height="4.4" fill="#4c4c4c"/></svg><span class="t" style="top:86.29px;font-size:7.4px;line-height:9.62px;color:#3a3a3a;transform:scaleX(0.880);transform-origin:left center;left:331.8px;">-50</span><span class="t" style="top:86.29px;font-size:7.4px;line-height:9.62px;color:#3a3a3a;transform:scaleX(0.880);transform-origin:left center;left:365.8px;">-40</span><span class="t" style="top:86.29px;font-size:7.4px;line-height:9.62px;color:#3a3a3a;transform:scaleX(0.880);transform-origin:left center;left:399.8px;">-30</span><span class="t" style="top:86.29px;font-size:7.4px;line-height:9.62px;color:#3a3a3a;transform:scaleX(0.880);transform-origin:left center;left:433.8px;">-20</span><span class="t" style="top:86.29px;font-size:7.4px;line-height:9.62px;color:#3a3a3a;transform:scaleX(0.880);transform-origin:left center;left:467.8px;">-10</span><span class="t" style="top:86.29px;font-size:7.4px;line-height:9.62px;color:#505050;transform:scaleX(0.824);transform-origin:left center;left:501.8px;">0</span><span class="t" style="top:86.29px;font-size:7.4px;line-height:9.62px;color:#505050;transform:scaleX(0.850);transform-origin:left center;left:535.8px;">10</span><span class="t" style="top:86.29px;font-size:7.4px;line-height:9.62px;color:#505050;transform:scaleX(0.850);transform-origin:left center;left:569.8px;">20</span><span class="t" style="top:86.29px;font-size:7.4px;line-height:9.62px;color:#505050;transform:scaleX(0.850);transform-origin:left center;left:603.8px;">30</span><span class="t" style="top:86.29px;font-size:7.4px;line-height:9.62px;color:#505050;transform:scaleX(0.850);transform-origin:left center;left:637.8px;">40</span><span class="t" style="top:86.29px;font-size:7.4px;line-height:9.62px;color:#505050;transform:scaleX(0.850);transform-origin:left center;left:671.8px;">50</span><span class="t" style="top:86.29px;font-size:7.4px;line-height:9.62px;color:#505050;transform:scaleX(0.850);transform-origin:left center;left:705.8px;">60</span><span class="t" style="top:86.29px;font-size:7.4px;line-height:9.62px;color:#505050;transform:scaleX(0.850);transform-origin:left center;left:739.8px;">70</span><span class="t" style="top:86.29px;font-size:7.4px;line-height:9.62px;color:#505050;transform:scaleX(0.850);transform-origin:left center;left:773.8px;">80</span><span class="t" style="top:86.29px;font-size:7.4px;line-height:9.62px;color:#505050;transform:scaleX(0.850);transform-origin:left center;left:807.8px;">90</span><span class="t" style="top:86.29px;font-size:7.4px;line-height:9.62px;color:#3a3a3a;transform:scaleX(0.843);transform-origin:left center;left:841.8px;">100</span><span class="t" style="top:86.29px;font-size:7.4px;line-height:9.62px;color:#3a3a3a;transform:scaleX(0.882);transform-origin:left center;left:875.8px;">110</span><span class="t" style="top:86.29px;font-size:7.4px;line-height:9.62px;color:#3a3a3a;transform:scaleX(0.843);transform-origin:left center;left:909.8px;">120</span><span class="t" style="top:86.29px;font-size:7.4px;line-height:9.62px;color:#3a3a3a;transform:scaleX(0.843);transform-origin:left center;left:943.8px;">130</span><span class="t" style="top:86.29px;font-size:7.4px;line-height:9.62px;color:#3a3a3a;transform:scaleX(0.843);transform-origin:left center;left:977.8px;">140</span><span class="t" style="top:86.29px;font-size:7.4px;line-height:9.62px;color:#3a3a3a;transform:scaleX(0.843);transform-origin:right center;right:16.2px;">150</span><div style="left:306.9px;top:99.2px;width:13.2px;height:211.8px;background:#d3d3d3;"></div><svg style="left:306.9px;top:99.2px;" width="13.2" height="211.8" viewBox="0 0 13.2 211.8"><rect x="0" y="-0.45" width="13.2" height="0.9" fill="#555"/><rect x="8.6" y="3.84" width="4.6" height="0.8" fill="#5a5a5a"/><rect x="8.6" y="8.07" width="4.6" height="0.8" fill="#5a5a5a"/><rect x="8.6" y="12.31" width="4.6" height="0.8" fill="#5a5a5a"/><rect x="8.6" y="16.54" width="4.6" height="0.8" fill="#5a5a5a"/><rect x="8.6" y="20.78" width="4.6" height="0.8" fill="#5a5a5a"/><rect x="8.6" y="25.02" width="4.6" height="0.8" fill="#5a5a5a"/><rect x="8.6" y="29.25" width="4.6" height="0.8" fill="#5a5a5a"/><rect x="8.6" y="33.49" width="4.6" height="0.8" fill="#5a5a5a"/><rect x="8.6" y="37.72" width="4.6" height="0.8" fill="#5a5a5a"/><rect x="8.6" y="41.96" width="4.6" height="0.8" fill="#5a5a5a"/><rect x="8.6" y="46.20" width="4.6" height="0.8" fill="#5a5a5a"/><rect x="8.6" y="50.43" width="4.6" height="0.8" fill="#5a5a5a"/><rect x="8.6" y="54.67" width="4.6" height="0.8" fill="#5a5a5a"/><rect x="8.6" y="58.90" width="4.6" height="0.8" fill="#5a5a5a"/><rect x="8.6" y="63.14" width="4.6" height="0.8" fill="#5a5a5a"/><rect x="8.6" y="67.38" width="4.6" height="0.8" fill="#5a5a5a"/><rect x="8.6" y="71.61" width="4.6" height="0.8" fill="#5a5a5a"/><rect x="8.6" y="75.85" width="4.6" height="0.8" fill="#5a5a5a"/><rect x="8.6" y="80.08" width="4.6" height="0.8" fill="#5a5a5a"/><rect x="8.6" y="84.32" width="4.6" height="0.8" fill="#5a5a5a"/><rect x="8.6" y="88.56" width="4.6" height="0.8" fill="#5a5a5a"/><rect x="8.6" y="92.79" width="4.6" height="0.8" fill="#5a5a5a"/><rect x="8.6" y="97.03" width="4.6" height="0.8" fill="#5a5a5a"/><rect x="8.6" y="101.26" width="4.6" height="0.8" fill="#5a5a5a"/><rect x="0" y="105.45" width="13.2" height="0.9" fill="#555"/><rect x="8.6" y="109.74" width="4.6" height="0.8" fill="#5a5a5a"/><rect x="8.6" y="113.97" width="4.6" height="0.8" fill="#5a5a5a"/><rect x="8.6" y="118.21" width="4.6" height="0.8" fill="#5a5a5a"/><rect x="8.6" y="122.44" width="4.6" height="0.8" fill="#5a5a5a"/><rect x="8.6" y="126.68" width="4.6" height="0.8" fill="#5a5a5a"/><rect x="8.6" y="130.92" width="4.6" height="0.8" fill="#5a5a5a"/><rect x="8.6" y="135.15" width="4.6" height="0.8" fill="#5a5a5a"/><rect x="8.6" y="139.39" width="4.6" height="0.8" fill="#5a5a5a"/><rect x="8.6" y="143.62" width="4.6" height="0.8" fill="#5a5a5a"/><rect x="8.6" y="147.86" width="4.6" height="0.8" fill="#5a5a5a"/><rect x="8.6" y="152.10" width="4.6" height="0.8" fill="#5a5a5a"/><rect x="8.6" y="156.33" width="4.6" height="0.8" fill="#5a5a5a"/><rect x="8.6" y="160.57" width="4.6" height="0.8" fill="#5a5a5a"/><rect x="8.6" y="164.80" width="4.6" height="0.8" fill="#5a5a5a"/><rect x="8.6" y="169.04" width="4.6" height="0.8" fill="#5a5a5a"/><rect x="8.6" y="173.28" width="4.6" height="0.8" fill="#5a5a5a"/><rect x="8.6" y="177.51" width="4.6" height="0.8" fill="#5a5a5a"/><rect x="8.6" y="181.75" width="4.6" height="0.8" fill="#5a5a5a"/><rect x="8.6" y="185.98" width="4.6" height="0.8" fill="#5a5a5a"/><rect x="8.6" y="190.22" width="4.6" height="0.8" fill="#5a5a5a"/><rect x="8.6" y="194.46" width="4.6" height="0.8" fill="#5a5a5a"/><rect x="8.6" y="198.69" width="4.6" height="0.8" fill="#5a5a5a"/><rect x="8.6" y="202.93" width="4.6" height="0.8" fill="#5a5a5a"/><rect x="8.6" y="207.16" width="4.6" height="0.8" fill="#5a5a5a"/><rect x="0" y="211.35" width="13.2" height="0.9" fill="#555"/></svg><span class="t" style="top:101.42px;font-size:7.2px;line-height:9.36px;color:#4a4a4a;transform:scaleX(0.800);transform-origin:left center;left:307.3px;">0</span><span class="t" style="top:154.42px;font-size:7.2px;line-height:9.36px;color:#4a4a4a;transform:scaleX(0.825);transform-origin:left center;left:307.3px;">25</span><span class="t" style="top:207.42px;font-size:7.2px;line-height:9.36px;color:#4a4a4a;transform:scaleX(0.825);transform-origin:left center;left:307.3px;">50</span><span class="t" style="top:260.42px;font-size:7.2px;line-height:9.36px;color:#4a4a4a;transform:scaleX(0.825);transform-origin:left center;left:307.3px;">75</span><span class="t" style="top:300.62px;font-size:7.2px;line-height:9.36px;color:#4a4a4a;transform:scaleX(0.800);transform-origin:left center;left:307.3px;">100</span><div style="left:320.2px;top:99.2px;width:698.8px;height:211.8px;background:#193e6a;"></div><div style="left:470px;top:99.2px;width:30px;height:211.8px;background:#000;background:linear-gradient(90deg,rgba(40,92,144,0) 0%,rgba(40,92,144,0.36) 22%,rgba(40,92,144,0.42) 100%);"></div><div style="left:470px;top:99.2px;width:30px;height:60px;background:#000;background:linear-gradient(180deg,rgba(60,110,160,0.35) 0%,rgba(60,110,160,0.25) 50%,rgba(60,110,160,0) 100%);-webkit-mask-image:linear-gradient(90deg,transparent 0%,#000 30%);mask-image:linear-gradient(90deg,transparent 0%,#000 30%);"></div><div style="left:839.5px;top:99.2px;width:26px;height:211.8px;background:#000;background:linear-gradient(90deg,rgba(40,92,144,0.42) 0%,rgba(40,92,144,0.36) 75%,rgba(40,92,144,0) 100%);"></div><div style="left:839.5px;top:99.2px;width:26px;height:70px;background:#000;background:linear-gradient(180deg,rgba(60,110,160,0.35) 0%,rgba(60,110,160,0.25) 50%,rgba(60,110,160,0) 100%);-webkit-mask-image:linear-gradient(270deg,transparent 0%,#000 30%);mask-image:linear-gradient(270deg,transparent 0%,#000 30%);"></div><svg style="left:500px;top:99.2px;overflow:hidden;" width="339.5" height="211.8" viewBox="0 0 339.5 211.8"><rect width="339.5" height="211.8" fill="#0b0b0b"/><g filter="url(#b8)" opacity="0.165"><g transform="translate(-15.4,-6.7) scale(1.774)"><use href="#photo"/></g></g></svg><div style="left:560px;top:136.2px;width:219.6px;height:137.4px;background:#f4f4f4;"></div><svg preserveAspectRatio="none" style="left:565.2px;top:141.8px;overflow:hidden;" width="209" height="126.8" viewBox="0 0 209 127"><use href="#photo"/></svg><svg style="left:559px;top:135.2px;" width="221.6" height="139.4" viewBox="0 0 221.6 139.4"><rect x="0.7" y="0.7" width="220.2" height="138" fill="none" stroke="#3a3a3a" stroke-width="0.8" stroke-dasharray="4 3" opacity="0.75"/></svg><svg style="left:550.2px;top:128.8px;" width="26" height="22" viewBox="0 0 26 22"><circle cx="9.90" cy="7.80" r="2.3" fill="#d9a31f"/><path d="M11.80 4.00 Q5.00 4.80 4.00 11.20" fill="none" stroke="#d9a31f" stroke-width="1.5"/><path d="M12.99 3.86 L10.43 6.07 L9.99 2.30z" fill="#d9a31f"/><path d="M3.81 12.39 L2.37 9.33 L6.12 9.91z" fill="#d9a31f"/></svg><svg style="left:775.8px;top:129.2px;" width="26" height="22" viewBox="0 0 26 22"><circle cx="4.00" cy="7.30" r="2.3" fill="#d9a31f"/><path d="M9.20 4.00 Q16.00 5.00 17.20 10.60" fill="none" stroke="#d9a31f" stroke-width="1.5"/><path d="M8.01 3.83 L11.06 2.35 L10.51 6.11z" fill="#d9a31f"/><path d="M17.45 11.77 L15.01 9.43 L18.72 8.64z" fill="#d9a31f"/></svg><svg style="left:550.2px;top:270px;" width="26" height="22" viewBox="0 0 26 22"><circle cx="9.60" cy="4.00" r="2.3" fill="#d9a31f"/><path d="M4.00 9.20 Q5.00 14.60 11.20 15.40" fill="none" stroke="#d9a31f" stroke-width="1.5"/><path d="M3.78 8.02 L6.16 10.43 L2.42 11.12z" fill="#d9a31f"/><path d="M12.39 15.55 L9.37 17.08 L9.86 13.31z" fill="#d9a31f"/></svg><svg style="left:775.6px;top:270px;" width="26" height="22" viewBox="0 0 26 22"><circle cx="4.00" cy="4.00" r="2.3" fill="#d9a31f"/><path d="M17.70 9.40 Q16.80 14.60 10.40 15.40" fill="none" stroke="#d9a31f" stroke-width="1.5"/><path d="M17.90 8.22 L19.30 11.30 L15.55 10.65z" fill="#d9a31f"/><path d="M9.21 15.55 L11.75 13.32 L12.22 17.09z" fill="#d9a31f"/></svg><svg style="left:670.1px;top:204.8px;" width="9" height="9" viewBox="0 0 9 9"><circle cx="4.5" cy="4.5" r="3.3" fill="none" stroke="#d9a31f" stroke-width="1.1"/><path d="M4.5 0 V9 M0 4.5 H9" stroke="#d9a31f" stroke-width="0.8"/></svg><div style="left:312.3px;top:318.7px;width:247.5px;height:1.3px;background:#5b9be0;"></div><div style="left:562px;top:319px;width:452px;height:1px;background:#8a8a8a;"></div><div style="left:558.5px;top:316.5px;width:6px;height:6px;background:#d6d6d6;border-radius:3px;"></div><svg style="left:317.8px;top:329.7px;" width="12" height="11" viewBox="0 0 12 11"><rect x="0" y="0.8" width="1.8" height="9.4" fill="#0d0d0d"/><path d="M6.8 0.8 V10.2 L1.8 5.5z M11.8 0.8 V10.2 L6.8 5.5z" fill="#0d0d0d"/></svg><svg style="left:335px;top:329.7px;" width="11.5" height="11" viewBox="0 0 11.5 11"><path d="M5.4 1.4 V9.6 L0.2 5.5z M11.2 1.4 V9.6 L6 5.5z" fill="#0d0d0d"/></svg><svg style="left:352px;top:329.7px;" width="10" height="11" viewBox="0 0 10 11"><path d="M0.4 0.2 L9.4 5.5 L0.4 10.8z" fill="#0d0d0d"/></svg><svg style="left:367px;top:329.7px;" width="11" height="11" viewBox="0 0 11 11"><rect x="0.2" y="0.2" width="10.6" height="10.6" fill="#0d0d0d"/></svg><svg style="left:383px;top:329.7px;" width="11.5" height="11" viewBox="0 0 11.5 11"><path d="M0.3 1.4 V9.6 L5.5 5.5z M6.1 1.4 V9.6 L11.3 5.5z" fill="#0d0d0d"/></svg><svg style="left:399px;top:329.7px;" width="12" height="11" viewBox="0 0 12 11"><rect x="10.2" y="0.8" width="1.8" height="9.4" fill="#0d0d0d"/><path d="M0.2 0.8 V10.2 L5.2 5.5z M5.2 0.8 V10.2 L10.2 5.5z" fill="#0d0d0d"/></svg><span class="t" style="top:330.54px;font-size:8.4px;line-height:10.92px;color:#222;transform:scaleX(0.945);transform-origin:left center;left:417.3px;">00:01.884 / 00:05.292</span><svg style="left:500px;top:329.7px;" width="12.5" height="11" viewBox="0 0 12.5 11"><path d="M0.3 3.8 H2.6 L5.6 1 V10 L2.6 7.2 H0.3z" fill="#0d0d0d"/><path d="M7 3.6 Q8.2 5.5 7 7.4 M8.8 2.2 Q10.8 5.5 8.8 8.8" fill="none" stroke="#0d0d0d" stroke-width="1"/></svg><svg style="left:516.5px;top:329.7px;" width="12" height="11" viewBox="0 0 12 11"><path d="M0.4 0.8 H8.6 V6 H6.4 V8.8 H0.4z" fill="#0d0d0d"/><circle cx="8.3" cy="7.8" r="1.7" fill="none" stroke="#0d0d0d" stroke-width="0.9"/><path d="M9.5 9 L11.4 10.8" stroke="#0d0d0d" stroke-width="1.1"/></svg><svg style="left:533px;top:329.7px;" width="11.5" height="11" viewBox="0 0 11.5 11"><rect x="0.5" y="0.5" width="10.4" height="10" fill="none" stroke="#0d0d0d" stroke-width="1"/><path d="M2 2 H4.4 L2 4.4z M9.4 2 V4.4 L7 2z M2 9 V6.6 L4.4 9z M9.4 9 H7 L9.4 6.6z" fill="#0d0d0d"/><path d="M3 3 L8.4 8 M8.4 3 L3 8" stroke="#0d0d0d" stroke-width="0.7"/></svg><svg style="left:549.3px;top:329.7px;" width="12" height="11" viewBox="0 0 12 11"><rect x="0.7" y="1.2" width="10.6" height="8.8" fill="none" stroke="#0d0d0d" stroke-width="1.3"/><path d="M4.2 3.2 L8.4 5.6 L4.2 8z" fill="#0d0d0d"/></svg><span class="t" style="top:330.18px;font-size:8.8px;line-height:11.44px;color:#222;transform:scaleX(0.911);transform-origin:right center;right:100.6px;">Slide 8 of 186</span><div style="left:928.3px;top:328.5px;width:81.7px;height:13px;background:#6b6b6b;border-radius:3.5px;"></div><div style="left:928.3px;top:328.5px;width:40.85px;height:13px;background:#2c7dd4;border-radius:3.5px 0 0 3.5px;"></div><div style="left:941.517px;top:328.5px;width:0.8px;height:13px;background:#8fb8e8;"></div><div style="left:955.133px;top:328.5px;width:0.8px;height:13px;background:#8fb8e8;"></div><div style="left:968.75px;top:328.5px;width:0.8px;height:13px;background:#9a9a9a;"></div><div style="left:982.367px;top:328.5px;width:0.8px;height:13px;background:#9a9a9a;"></div><div style="left:995.983px;top:328.5px;width:0.8px;height:13px;background:#9a9a9a;"></div><svg style="left:931.608px;top:331.5px;" width="7" height="7" viewBox="0 0 7 7"><path d="M1 1 L3.6 1.8 L2.9 2.5 L6.2 5.8 L5.8 6.2 L2.5 2.9 L1.8 3.6z" fill="#0c1e36"/></svg><svg style="left:945.225px;top:331.5px;" width="7" height="7" viewBox="0 0 7 7"><path d="M3.5 0.6 V6.4 M0.6 3.5 H6.4" stroke="#e8f1fc" stroke-width="1"/></svg><svg style="left:958.842px;top:331.5px;" width="7" height="7" viewBox="0 0 7 7"><path d="M1.2 3 A2.4 2.4 0 0 1 5.4 2 M5.8 4 A2.4 2.4 0 0 1 1.6 5" fill="none" stroke="#e8f1fc" stroke-width="1"/><path d="M4.6 0.6 L6.2 2.6 L3.9 2.7z M2.4 6.4 L0.8 4.4 L3.1 4.3z" fill="#e8f1fc"/></svg><svg style="left:972.458px;top:331.5px;" width="7" height="7" viewBox="0 0 7 7"><path d="M1 4.6 L3 2 L6 2.2 L5 5.4 L2 5.8z" fill="#e0e0e0"/></svg><svg style="left:986.075px;top:331.5px;" width="7" height="7" viewBox="0 0 7 7"><rect x="1" y="1.8" width="5" height="3.6" fill="#e4e4e4"/></svg><svg style="left:999.692px;top:331.5px;" width="7" height="7" viewBox="0 0 7 7"><path d="M1.4 5.6 L5.6 1.4" stroke="#ccc" stroke-width="0.7" stroke-dasharray="1 0.8"/><circle cx="1.5" cy="5.5" r="0.8" fill="#ddd"/><circle cx="5.5" cy="1.5" r="0.8" fill="#ddd"/></svg><div style="left:0px;top:351.8px;width:1024px;height:31.6px;background:#e2e3e7;"></div><div style="left:0px;top:383.4px;width:1024px;height:1.8px;background:#d2d2d5;"></div><div style="left:0px;top:385.2px;width:1024px;height:123px;background:#ffffff;"></div><div style="left:0px;top:385.2px;width:1024px;height:2.2px;background:#f3f3f5;"></div><div style="left:0px;top:357.4px;width:118.2px;height:19.6px;background:#6f6f6f;border-radius:4px;"></div><div style="left:0px;top:357.4px;width:30.3px;height:19.6px;background:#2c7dd4;border-radius:4px 0 0 4px;"></div><div style="left:30px;top:357.4px;width:0.8px;height:19.6px;background:#b5b5b5;"></div><div style="left:70.2px;top:357.4px;width:0.8px;height:19.6px;background:#a0a0a0;"></div><span class="t" style="top:362.81px;font-size:8.6px;line-height:11.18px;color:#eaf2fc;transform:scaleX(0.884);transform-origin:left center;left:4.3px;">Slides</span><span class="t" style="top:362.81px;font-size:8.6px;line-height:11.18px;color:#f2f2f2;transform:scaleX(0.924);transform-origin:left center;left:36.1px;">Timeline</span><span class="t" style="top:362.81px;font-size:8.6px;line-height:11.18px;color:#f2f2f2;transform:scaleX(0.893);transform-origin:left center;left:76.6px;">Keyframes</span><div style="left:148.8px;top:359.3px;width:102.4px;height:16.2px;background:#3a883a;border-radius:3.5px;"></div><svg style="left:161px;top:361.8px;" width="11.5" height="11.5" viewBox="0 0 11.5 11.5"><rect x="0.5" y="0.5" width="10.3" height="10.3" fill="none" stroke="#fff" stroke-width="0.9"/><path d="M1.4 8.2 L3.8 5 L5.4 6.8 L7.6 3.8 L9.9 8.2z" fill="#fff"/><circle cx="3.2" cy="2.8" r="1" fill="#fff"/><rect x="1.2" y="9" width="8.9" height="0.9" fill="#fff"/></svg><span class="t" style="top:362.71px;font-size:8.6px;line-height:11.18px;color:#fff;transform:scaleX(0.974);transform-origin:left center;left:175.7px;">Add Photo/Video</span><svg style="left:256.8px;top:362.3px;" width="12.5" height="9.8" viewBox="0 0 12.5 9.8"><rect x="0.8" y="0.8" width="10.8" height="7.6" rx="1" fill="none" stroke="#0d0d0d" stroke-width="1.4"/></svg><svg style="left:276.6px;top:362.3px;" width="12.5" height="9.8" viewBox="0 0 12.5 9.8"><rect x="0.8" y="0.8" width="10.8" height="7.6" rx="1" fill="none" stroke="#0d0d0d" stroke-width="1.4"/><path d="M6.2 0.8 V8.4" stroke="#0d0d0d" stroke-width="1.1"/></svg><svg style="left:297.6px;top:361.6px;" width="9" height="11.6" viewBox="0 0 9 11.6"><path d="M1.4 3.6 H7.6 L7 10.6 Q7 11.4 6.2 11.4 H2.8 Q2 11.4 2 10.6z" fill="#0d0d0d"/><rect x="0.4" y="1.6" width="8.2" height="1.5" rx="0.5" fill="#0d0d0d"/><rect x="3" y="0.3" width="3" height="1.6" rx="0.5" fill="#0d0d0d"/></svg><div style="left:320.5px;top:359.3px;width:78.6px;height:16.2px;background:#6f6f6f;border-radius:3.5px;"></div><svg style="left:332.6px;top:361.6px;" width="11.5" height="11.5" viewBox="0 0 11.5 11.5"><rect x="0.3" y="0.3" width="9.6" height="9.6" fill="#fff"/><path d="M3.6 7 V2.6 L7.4 1.9 V6.2" fill="none" stroke="#6f6f6f" stroke-width="0.9"/><ellipse cx="2.9" cy="7.1" rx="1.1" ry="0.9" fill="#6f6f6f"/><ellipse cx="6.7" cy="6.3" rx="1.1" ry="0.9" fill="#6f6f6f"/><circle cx="9" cy="9" r="2.2" fill="#6f6f6f" stroke="#fff" stroke-width="0.7"/></svg><span class="t" style="top:362.71px;font-size:8.6px;line-height:11.18px;color:#fff;transform:scaleX(0.990);transform-origin:left center;left:347.3px;">Add Audio</span><div style="left:0.9px;top:393px;width:76px;height:81.2px;background:#e2e3e7;"></div><div style="left:1.8px;top:453.8px;width:74.2px;height:19.6px;background:#fff;"></div><div style="left:7.2px;top:394.8px;width:63.4px;height:35.3px;background:#333333;"></div><div style="left:8.4px;top:395.7px;width:2.3px;height:33.5px;background:#f4f4f4;"></div><div style="left:67.1px;top:395.7px;width:2.3px;height:33.5px;background:#f4f4f4;"></div><div style="left:10.9px;top:395.3px;width:56px;height:34.3px;background:#000;overflow:hidden;"><span class="t" style="left:3px;top:14.8px;width:50px;text-align:center;font-size:3.0px;line-height:5px;color:#e4e4e4;font-style:italic;font-family:&quot;Liberation Serif&quot;,serif;">20 years of loving · living · laughing …</span></div><span class="t" style="top:434.36px;font-size:15.6px;line-height:20.28px;color:#0a0a0a;font-weight:bold;left:2.5px;">1</span><div style="left:22.4px;top:455px;width:35.4px;height:17.4px;background:#b3b3b3;border:0.9px solid #7f7f7f;"></div><span class="t" style="top:460.375px;font-size:8.5px;line-height:11.05px;color:#3c3c3c;transform:scaleX(0.870);transform-origin:left center;left:27.7px;">1.52</span><svg style="left:59.7px;top:458px;" width="12" height="12" viewBox="0 0 12 12"><circle cx="6" cy="6" r="4.9" fill="none" stroke="#0d0d0d" stroke-width="1.25"/><path d="M6 2.9 V6.3 H8.7" fill="none" stroke="#0d0d0d" stroke-width="1.1"/></svg><div style="left:126.35px;top:393px;width:76px;height:81.2px;background:#e2e3e7;"></div><div style="left:127.25px;top:453.8px;width:74.2px;height:19.6px;background:#fff;"></div><div style="left:132.65px;top:394.8px;width:63.4px;height:35.3px;background:#333333;"></div><div style="left:133.85px;top:395.7px;width:2.3px;height:33.5px;background:#f4f4f4;"></div><div style="left:192.55px;top:395.7px;width:2.3px;height:33.5px;background:#f4f4f4;"></div><div style="left:136.35px;top:395.3px;width:56px;height:34.3px;background:#000;overflow:hidden;"><span class="t" style="left:3px;top:14.8px;width:50px;text-align:center;font-size:3.3px;line-height:5px;color:#e4e4e4;font-style:italic;font-family:&quot;Liberation Serif&quot;,serif;">… and growing together</span></div><span class="t" style="top:434.36px;font-size:15.6px;line-height:20.28px;color:#0a0a0a;font-weight:bold;transform:scaleX(0.967);transform-origin:left center;left:128.55px;">2</span><div style="left:147.85px;top:455px;width:35.4px;height:17.4px;background:#b3b3b3;border:0.9px solid #7f7f7f;"></div><span class="t" style="top:460.375px;font-size:8.5px;line-height:11.05px;color:#3c3c3c;transform:scaleX(0.870);transform-origin:left center;left:153.15px;">1.52</span><svg style="left:185.15px;top:458px;" width="12" height="12" viewBox="0 0 12 12"><circle cx="6" cy="6" r="4.9" fill="none" stroke="#0d0d0d" stroke-width="1.25"/><path d="M6 2.9 V6.3 H8.7" fill="none" stroke="#0d0d0d" stroke-width="1.1"/></svg><div style="left:251.8px;top:393px;width:76px;height:81.2px;background:#e2e3e7;"></div><div style="left:252.7px;top:453.8px;width:74.2px;height:19.6px;background:#fff;"></div><div style="left:258.1px;top:394.8px;width:63.4px;height:35.3px;background:#333333;"></div><div style="left:259.3px;top:395.7px;width:2.3px;height:33.5px;background:#f4f4f4;"></div><div style="left:318px;top:395.7px;width:2.3px;height:33.5px;background:#f4f4f4;"></div><div style="left:261.8px;top:395.3px;width:56px;height:34.3px;background:#000;overflow:hidden;"><span class="t" style="left:3px;top:14.8px;width:50px;text-align:center;font-size:3.3px;line-height:5px;color:#e4e4e4;font-style:italic;font-family:&quot;Liberation Serif&quot;,serif;">Happy Anniversary Honey</span></div><span class="t" style="top:434.36px;font-size:15.6px;line-height:20.28px;color:#0a0a0a;font-weight:bold;transform:scaleX(0.967);transform-origin:left center;left:254px;">3</span><div style="left:273.3px;top:455px;width:35.4px;height:17.4px;background:#b3b3b3;border:0.9px solid #7f7f7f;"></div><span class="t" style="top:460.375px;font-size:8.5px;line-height:11.05px;color:#3c3c3c;transform:scaleX(0.870);transform-origin:left center;left:278.6px;">1.52</span><svg style="left:310.6px;top:458px;" width="12" height="12" viewBox="0 0 12 12"><circle cx="6" cy="6" r="4.9" fill="none" stroke="#0d0d0d" stroke-width="1.25"/><path d="M6 2.9 V6.3 H8.7" fill="none" stroke="#0d0d0d" stroke-width="1.1"/></svg><div style="left:377px;top:393px;width:75.8px;height:81.2px;background:#e2e3e7;"></div><div style="left:377.9px;top:453.8px;width:74px;height:19.6px;background:#fff;"></div><div style="left:383.2px;top:394.8px;width:63.4px;height:35.3px;background:#333333;"></div><div style="left:384.4px;top:395.7px;width:2.3px;height:33.5px;background:#f4f4f4;"></div><div style="left:443.1px;top:395.7px;width:2.3px;height:33.5px;background:#f4f4f4;"></div><div style="left:386.9px;top:395.3px;width:56px;height:34.3px;background:#000;overflow:hidden;"><svg style="left:0;top:0" width="56.6" height="35.3" viewBox="0 0 56.6 35.3"><rect width="56.6" height="35.3" fill="#474747"/><g filter="url(#b3)"><path d="M0 0 H20 L4 35 H0z" fill="#3a3a3a"/><path d="M18 0 H40 L30 14z" fill="#222"/><ellipse cx="50" cy="14" rx="6" ry="12" fill="#2a2a2a"/><path d="M0 22 L12 35 H0z" fill="#666"/><rect x="20" y="32" width="14" height="4" fill="#111"/></g></svg><div style="left:11.6px;top:3.1px;width:33px;height:29px;background:#d0d0d0;"></div><svg style="left:12.7px;top:4.2px" width="30.8" height="26.8" viewBox="0 0 30.8 26.8"><g filter="url(#b1)"><rect width="31" height="27" fill="#8a8a84"/><path d="M18 0 H31 V16 L24 10z" fill="#2e2e2e"/><path d="M0 0 H14 L8 14 L0 18z" fill="#7a766c"/><ellipse cx="15.5" cy="8" rx="4" ry="5.5" fill="#cfcfc4"/><ellipse cx="12" cy="13" rx="3" ry="5" fill="#555"/><path d="M13 14 Q22 10 27 20 L31 27 H12z" fill="#d6d6d0"/><path d="M0 27 L6 18 L11 27z" fill="#d2d2cc"/><path d="M5 16 L12 12 L12 27 H9z" fill="#3a3a3a"/></g><g opacity="0.6"><rect width="31" height="27" fill="#8a8a84"/><path d="M18 0 H31 V16 L24 10z" fill="#2e2e2e"/><path d="M0 0 H14 L8 14 L0 18z" fill="#7a766c"/><ellipse cx="15.5" cy="8" rx="4" ry="5.5" fill="#cfcfc4"/><ellipse cx="12" cy="13" rx="3" ry="5" fill="#555"/><path d="M13 14 Q22 10 27 20 L31 27 H12z" fill="#d6d6d0"/><path d="M0 27 L6 18 L11 27z" fill="#d2d2cc"/><path d="M5 16 L12 12 L12 27 H9z" fill="#3a3a3a"/></g></svg></div><span class="t" style="top:434.36px;font-size:15.6px;line-height:20.28px;color:#0a0a0a;font-weight:bold;transform:scaleX(0.967);transform-origin:left center;left:379.2px;">4</span><span class="t" style="top:438.84px;font-size:8.4px;line-height:10.92px;color:#1c1c1c;transform:scaleX(0.936);transform-origin:left center;left:392.6px;">Backdrop Dark...</span><div style="left:398.3px;top:455px;width:35.4px;height:17.4px;background:#b3b3b3;border:0.9px solid #7f7f7f;"></div><span class="t" style="top:460.375px;font-size:8.5px;line-height:11.05px;color:#3c3c3c;transform:scaleX(0.870);transform-origin:left center;left:403.6px;">1.52</span><svg style="left:435.6px;top:458px;" width="12" height="12" viewBox="0 0 12 12"><circle cx="6" cy="6" r="4.9" fill="none" stroke="#0d0d0d" stroke-width="1.25"/><path d="M6 2.9 V6.3 H8.7" fill="none" stroke="#0d0d0d" stroke-width="1.1"/></svg><div style="left:502.3px;top:393px;width:76.3px;height:81.2px;background:#e2e3e7;"></div><div style="left:503.2px;top:453.8px;width:74.5px;height:19.6px;background:#fff;"></div><div style="left:508.75px;top:394.8px;width:63.4px;height:35.3px;background:#333333;"></div><div style="left:509.95px;top:395.7px;width:2.3px;height:33.5px;background:#f4f4f4;"></div><div style="left:568.65px;top:395.7px;width:2.3px;height:33.5px;background:#f4f4f4;"></div><div style="left:512.45px;top:395.3px;width:56px;height:34.3px;background:#000;overflow:hidden;"><svg style="left:0;top:0" width="56.6" height="35.3" viewBox="0 0 56.6 35.3"><rect width="56.6" height="35.3" fill="#1a140a"/><g filter="url(#b3)"><rect x="0" y="0" width="56.6" height="12" fill="#5a3f10"/><rect x="44" y="6" width="12" height="22" fill="#4a3410"/><rect x="0" y="14" width="8" height="20" fill="#101820"/><rect x="0" y="28" width="56.6" height="8" fill="#0a0a0c"/></g></svg><div style="left:7.4px;top:3.1px;width:41.8px;height:29px;background:#d6d6d6;"></div><svg style="left:8.5px;top:4.2px" width="39.6" height="26.8" viewBox="0 0 39.6 26.8"><g filter="url(#b1)"><rect width="40" height="27" fill="#3a2a10"/><rect x="0" y="0" width="40" height="9" fill="#7a5a16"/><rect x="10" y="8" width="16" height="10" fill="#d9caa2"/><rect x="4" y="9" width="5" height="17" fill="#2c4a72"/><ellipse cx="6.5" cy="9" rx="2" ry="2.4" fill="#c9a98a"/><rect x="12" y="12" width="8" height="14" fill="#1c1c22"/><rect x="20" y="11" width="7" height="15" fill="#1f3554"/><rect x="27" y="12" width="6" height="14" fill="#e6dcc0"/><rect x="33" y="6" width="7" height="20" fill="#5a4012"/><rect x="0" y="23" width="40" height="4" fill="#161616"/><rect x="23" y="18" width="5" height="6" fill="#9ab8c8"/></g><g opacity="0.6"><rect width="40" height="27" fill="#3a2a10"/><rect x="0" y="0" width="40" height="9" fill="#7a5a16"/><rect x="10" y="8" width="16" height="10" fill="#d9caa2"/><rect x="4" y="9" width="5" height="17" fill="#2c4a72"/><ellipse cx="6.5" cy="9" rx="2" ry="2.4" fill="#c9a98a"/><rect x="12" y="12" width="8" height="14" fill="#1c1c22"/><rect x="20" y="11" width="7" height="15" fill="#1f3554"/><rect x="27" y="12" width="6" height="14" fill="#e6dcc0"/><rect x="33" y="6" width="7" height="20" fill="#5a4012"/><rect x="0" y="23" width="40" height="4" fill="#161616"/><rect x="23" y="18" width="5" height="6" fill="#9ab8c8"/></g></svg></div><span class="t" style="top:434.36px;font-size:15.6px;line-height:20.28px;color:#0a0a0a;font-weight:bold;transform:scaleX(0.967);transform-origin:left center;left:504.5px;">5</span><span class="t" style="top:438.84px;font-size:8.4px;line-height:10.92px;color:#1c1c1c;transform:scaleX(0.936);transform-origin:left center;left:517.9px;">Backdrop Dark...</span><div style="left:524.1px;top:455px;width:35.4px;height:17.4px;background:#b3b3b3;border:0.9px solid #7f7f7f;"></div><span class="t" style="top:460.375px;font-size:8.5px;line-height:11.05px;color:#3c3c3c;transform:scaleX(0.870);transform-origin:left center;left:529.4px;">1.52</span><svg style="left:561.4px;top:458px;" width="12" height="12" viewBox="0 0 12 12"><circle cx="6" cy="6" r="4.9" fill="none" stroke="#0d0d0d" stroke-width="1.25"/><path d="M6 2.9 V6.3 H8.7" fill="none" stroke="#0d0d0d" stroke-width="1.1"/></svg><div style="left:627.8px;top:393px;width:95px;height:81.2px;background:#e2e3e7;"></div><div style="left:628.7px;top:453.8px;width:93.2px;height:19.6px;background:#fff;"></div><div style="left:643.6px;top:394.8px;width:63.4px;height:35.3px;background:#333333;"></div><div style="left:644.8px;top:395.7px;width:2.3px;height:33.5px;background:#f4f4f4;"></div><div style="left:703.5px;top:395.7px;width:2.3px;height:33.5px;background:#f4f4f4;"></div><div style="left:647.3px;top:395.3px;width:56px;height:34.3px;background:#000;overflow:hidden;"><svg style="left:0;top:0" width="56.6" height="35.3" viewBox="0 0 56.6 35.3"><rect width="56.6" height="35.3" fill="#030303"/><g filter="url(#b3)"><ellipse cx="12" cy="30" rx="7" ry="5" fill="#3a3030"/><ellipse cx="40" cy="4" rx="5" ry="3" fill="#2a1a10"/></g></svg><div style="left:12.4px;top:3.1px;width:31.1px;height:29px;background:#b9b9b9;"></div><svg style="left:13.5px;top:4.2px" width="28.9" height="26.8" viewBox="0 0 28.9 26.8"><g filter="url(#b1)"><rect width="29" height="27" fill="#060608"/><path d="M6 12 Q10 9 14 12 L15 27 H5z" fill="#dcdcf2"/><ellipse cx="9.6" cy="8.8" rx="1.8" ry="2.4" fill="#e0b8a8"/><ellipse cx="9.4" cy="7.4" rx="2.2" ry="1.8" fill="#2a1a1a"/><ellipse cx="6" cy="20" rx="2.6" ry="2.8" fill="#c88a90"/><ellipse cx="19.6" cy="4.6" rx="1.8" ry="2.6" fill="#d8a890"/><path d="M18.8 8 h2 l0.6 8 h-3z" fill="#ececf4"/><ellipse cx="18" cy="18.6" rx="2.2" ry="1.4" fill="#e8d8d0"/><path d="M14 26 q6 -4 12 0 v1 h-12z" fill="#d0d0e0"/></g><g opacity="0.6"><rect width="29" height="27" fill="#060608"/><path d="M6 12 Q10 9 14 12 L15 27 H5z" fill="#dcdcf2"/><ellipse cx="9.6" cy="8.8" rx="1.8" ry="2.4" fill="#e0b8a8"/><ellipse cx="9.4" cy="7.4" rx="2.2" ry="1.8" fill="#2a1a1a"/><ellipse cx="6" cy="20" rx="2.6" ry="2.8" fill="#c88a90"/><ellipse cx="19.6" cy="4.6" rx="1.8" ry="2.6" fill="#d8a890"/><path d="M18.8 8 h2 l0.6 8 h-3z" fill="#ececf4"/><ellipse cx="18" cy="18.6" rx="2.2" ry="1.4" fill="#e8d8d0"/><path d="M14 26 q6 -4 12 0 v1 h-12z" fill="#d0d0e0"/></g></svg></div><span class="t" style="top:434.36px;font-size:15.6px;line-height:20.28px;color:#0a0a0a;font-weight:bold;transform:scaleX(0.967);transform-origin:left center;left:630px;">6</span><span class="t" style="top:438.84px;font-size:8.4px;line-height:10.92px;color:#1c1c1c;transform:scaleX(0.942);transform-origin:left center;left:643.4px;">Backdrop Dark Frame</span><div style="left:668.3px;top:455px;width:35.4px;height:17.4px;background:#b3b3b3;border:0.9px solid #7f7f7f;"></div><span class="t" style="top:460.375px;font-size:8.5px;line-height:11.05px;color:#3c3c3c;transform:scaleX(0.870);transform-origin:left center;left:673.6px;">1.52</span><svg style="left:705.6px;top:458px;" width="12" height="12" viewBox="0 0 12 12"><circle cx="6" cy="6" r="4.9" fill="none" stroke="#0d0d0d" stroke-width="1.25"/><path d="M6 2.9 V6.3 H8.7" fill="none" stroke="#0d0d0d" stroke-width="1.1"/></svg><div style="left:772.4px;top:393px;width:104.8px;height:81.2px;background:#e2e3e7;"></div><div style="left:773.3px;top:453.8px;width:103px;height:19.6px;background:#fff;"></div><div style="left:793.1px;top:394.8px;width:63.4px;height:35.3px;background:#333333;"></div><div style="left:794.3px;top:395.7px;width:2.3px;height:33.5px;background:#f4f4f4;"></div><div style="left:853px;top:395.7px;width:2.3px;height:33.5px;background:#f4f4f4;"></div><div style="left:796.8px;top:395.3px;width:56px;height:34.3px;background:#000;overflow:hidden;"><svg style="left:0;top:0" width="56.6" height="35.3" viewBox="0 0 56.6 35.3"><rect width="56.6" height="35.3" fill="#0c0c0c"/><g filter="url(#b3)"><ellipse cx="12" cy="13" rx="5" ry="8" fill="#5a5a5a"/><path d="M0 24 Q10 20 22 26 V36 H0z" fill="#606060"/><rect x="40" y="6" width="14" height="30" fill="#2a2a2a"/><rect x="46" y="0" width="10" height="9" fill="#000"/></g></svg><div style="left:15.8px;top:3.1px;width:24.8px;height:29px;background:#bdbdbd;"></div><svg style="left:16.9px;top:4.2px" width="22.6" height="26.8" viewBox="0 0 22.6 26.8"><g filter="url(#b1)"><rect width="22.6" height="27" fill="#050505"/><path d="M2 18 Q6 15 11 18 L12 27 H2z" fill="#f4f4f0"/><ellipse cx="7" cy="11.4" rx="2" ry="2.6" fill="#b4b4b4"/><ellipse cx="6.8" cy="9.8" rx="2.3" ry="1.6" fill="#222"/><ellipse cx="14.4" cy="6.6" rx="2.3" ry="3" fill="#c6c6c6"/><path d="M10 16 Q15 9 21 13 L22.6 27 H11z" fill="#262626"/><path d="M13.6 10.4 l1.6 0.4 l-1.8 6.4 l-1.2 -1.2z" fill="#e6e6e6"/></g><g opacity="0.6"><rect width="22.6" height="27" fill="#050505"/><path d="M2 18 Q6 15 11 18 L12 27 H2z" fill="#f4f4f0"/><ellipse cx="7" cy="11.4" rx="2" ry="2.6" fill="#b4b4b4"/><ellipse cx="6.8" cy="9.8" rx="2.3" ry="1.6" fill="#222"/><ellipse cx="14.4" cy="6.6" rx="2.3" ry="3" fill="#c6c6c6"/><path d="M10 16 Q15 9 21 13 L22.6 27 H11z" fill="#262626"/><path d="M13.6 10.4 l1.6 0.4 l-1.8 6.4 l-1.2 -1.2z" fill="#e6e6e6"/></g></svg></div><span class="t" style="top:434.36px;font-size:15.6px;line-height:20.28px;color:#0a0a0a;font-weight:bold;transform:scaleX(0.967);transform-origin:left center;left:774.6px;">7</span><span class="t" style="top:438.84px;font-size:8.4px;line-height:10.92px;color:#1c1c1c;transform:scaleX(0.928);transform-origin:left center;left:788px;">Backdrop Dark Frame...</span><div style="left:822.7px;top:455px;width:35.4px;height:17.4px;background:#b3b3b3;border:0.9px solid #7f7f7f;"></div><span class="t" style="top:460.375px;font-size:8.5px;line-height:11.05px;color:#3c3c3c;transform:scaleX(0.870);transform-origin:left center;left:828px;">1.52</span><svg style="left:860px;top:458px;" width="12" height="12" viewBox="0 0 12 12"><circle cx="6" cy="6" r="4.9" fill="none" stroke="#0d0d0d" stroke-width="1.25"/><path d="M6 2.9 V6.3 H8.7" fill="none" stroke="#0d0d0d" stroke-width="1.1"/></svg><div style="left:90.4px;top:409.8px;width:21.8px;height:15.7px;background:#000;background:linear-gradient(180deg,#3a3a3a 0%,#000 14%,#000 70%,#2c2c2c 100%);"></div><svg style="left:93.3px;top:409.2px;" width="16" height="16" viewBox="0 0 16 16"><circle cx="8" cy="8" r="6.2" fill="#2e2e2e" stroke="#f6f6f6" stroke-width="3"/></svg><span class="t" style="top:411.55px;font-size:9px;line-height:11.7px;color:#fff;font-weight:bold;transform:scaleX(0.892);transform-origin:center center;left:-98.6px;width:400px;text-align:center;"><span>D</span></span><div style="left:84.6px;top:427.9px;width:33.4px;height:18px;background:#b3b3b3;border:0.9px solid #7f7f7f;"></div><span class="t" style="top:433.575px;font-size:8.5px;line-height:11.05px;color:#3c3c3c;transform:scaleX(0.870);transform-origin:left center;left:89.9px;">1.88</span><svg style="left:95.3px;top:448.1px;" width="12" height="12" viewBox="0 0 12 12"><circle cx="6" cy="6" r="4.9" fill="none" stroke="#0d0d0d" stroke-width="1.25"/><path d="M6 2.9 V6.3 H8.7" fill="none" stroke="#0d0d0d" stroke-width="1.1"/></svg><div style="left:215.9px;top:409.8px;width:21.8px;height:15.7px;background:#000;background:linear-gradient(180deg,#3a3a3a 0%,#000 14%,#000 70%,#2c2c2c 100%);"></div><svg style="left:218.8px;top:409.2px;" width="16" height="16" viewBox="0 0 16 16"><circle cx="8" cy="8" r="6.2" fill="#2e2e2e" stroke="#f6f6f6" stroke-width="3"/></svg><span class="t" style="top:411.55px;font-size:9px;line-height:11.7px;color:#fff;font-weight:bold;transform:scaleX(0.892);transform-origin:center center;left:26.9px;width:400px;text-align:center;"><span>D</span></span><div style="left:210.1px;top:427.9px;width:33.4px;height:18px;background:#b3b3b3;border:0.9px solid #7f7f7f;"></div><span class="t" style="top:433.575px;font-size:8.5px;line-height:11.05px;color:#3c3c3c;transform:scaleX(0.870);transform-origin:left center;left:215.4px;">1.88</span><svg style="left:220.8px;top:448.1px;" width="12" height="12" viewBox="0 0 12 12"><circle cx="6" cy="6" r="4.9" fill="none" stroke="#0d0d0d" stroke-width="1.25"/><path d="M6 2.9 V6.3 H8.7" fill="none" stroke="#0d0d0d" stroke-width="1.1"/></svg><div style="left:341.3px;top:409.8px;width:21.8px;height:15.7px;background:#000;background:linear-gradient(180deg,#3a3a3a 0%,#000 14%,#000 70%,#2c2c2c 100%);"></div><svg style="left:344.2px;top:409.2px;" width="16" height="16" viewBox="0 0 16 16"><circle cx="8" cy="8" r="6.2" fill="#2e2e2e" stroke="#f6f6f6" stroke-width="3"/></svg><span class="t" style="top:411.55px;font-size:9px;line-height:11.7px;color:#fff;font-weight:bold;transform:scaleX(0.892);transform-origin:center center;left:152.3px;width:400px;text-align:center;"><span>D</span></span><div style="left:335.5px;top:427.9px;width:33.4px;height:18px;background:#b3b3b3;border:0.9px solid #7f7f7f;"></div><span class="t" style="top:433.575px;font-size:8.5px;line-height:11.05px;color:#3c3c3c;transform:scaleX(0.870);transform-origin:left center;left:340.8px;">1.88</span><svg style="left:346.2px;top:448.1px;" width="12" height="12" viewBox="0 0 12 12"><circle cx="6" cy="6" r="4.9" fill="none" stroke="#0d0d0d" stroke-width="1.25"/><path d="M6 2.9 V6.3 H8.7" fill="none" stroke="#0d0d0d" stroke-width="1.1"/></svg><div style="left:466.8px;top:409.8px;width:21.8px;height:15.7px;background:#000;background:linear-gradient(180deg,#3a3a3a 0%,#000 14%,#000 70%,#2c2c2c 100%);"></div><svg style="left:469.7px;top:409.2px;" width="16" height="16" viewBox="0 0 16 16"><circle cx="8" cy="8" r="6.2" fill="#2e2e2e" stroke="#f6f6f6" stroke-width="3"/></svg><span class="t" style="top:411.55px;font-size:9px;line-height:11.7px;color:#fff;font-weight:bold;transform:scaleX(0.892);transform-origin:center center;left:277.8px;width:400px;text-align:center;"><span>D</span></span><div style="left:461px;top:427.9px;width:33.4px;height:18px;background:#b3b3b3;border:0.9px solid #7f7f7f;"></div><span class="t" style="top:433.575px;font-size:8.5px;line-height:11.05px;color:#3c3c3c;transform:scaleX(0.870);transform-origin:left center;left:466.3px;">1.88</span><svg style="left:471.7px;top:448.1px;" width="12" height="12" viewBox="0 0 12 12"><circle cx="6" cy="6" r="4.9" fill="none" stroke="#0d0d0d" stroke-width="1.25"/><path d="M6 2.9 V6.3 H8.7" fill="none" stroke="#0d0d0d" stroke-width="1.1"/></svg><div style="left:592.3px;top:409.8px;width:21.8px;height:15.7px;background:#000;background:linear-gradient(180deg,#3a3a3a 0%,#000 14%,#000 70%,#2c2c2c 100%);"></div><svg style="left:595.2px;top:409.2px;" width="16" height="16" viewBox="0 0 16 16"><circle cx="8" cy="8" r="6.2" fill="#2e2e2e" stroke="#f6f6f6" stroke-width="3"/></svg><span class="t" style="top:411.55px;font-size:9px;line-height:11.7px;color:#fff;font-weight:bold;transform:scaleX(0.892);transform-origin:center center;left:403.3px;width:400px;text-align:center;"><span>D</span></span><div style="left:586.5px;top:427.9px;width:33.4px;height:18px;background:#b3b3b3;border:0.9px solid #7f7f7f;"></div><span class="t" style="top:433.575px;font-size:8.5px;line-height:11.05px;color:#3c3c3c;transform:scaleX(0.870);transform-origin:left center;left:591.8px;">1.88</span><svg style="left:597.2px;top:448.1px;" width="12" height="12" viewBox="0 0 12 12"><circle cx="6" cy="6" r="4.9" fill="none" stroke="#0d0d0d" stroke-width="1.25"/><path d="M6 2.9 V6.3 H8.7" fill="none" stroke="#0d0d0d" stroke-width="1.1"/></svg><div style="left:736.9px;top:409.8px;width:21.8px;height:15.7px;background:#000;background:linear-gradient(180deg,#3a3a3a 0%,#000 14%,#000 70%,#2c2c2c 100%);"></div><svg style="left:739.8px;top:409.2px;" width="16" height="16" viewBox="0 0 16 16"><circle cx="8" cy="8" r="6.2" fill="#2e2e2e" stroke="#f6f6f6" stroke-width="3"/></svg><span class="t" style="top:411.55px;font-size:9px;line-height:11.7px;color:#fff;font-weight:bold;transform:scaleX(0.892);transform-origin:center center;left:547.9px;width:400px;text-align:center;"><span>D</span></span><div style="left:731.1px;top:427.9px;width:33.4px;height:18px;background:#b3b3b3;border:0.9px solid #7f7f7f;"></div><span class="t" style="top:433.575px;font-size:8.5px;line-height:11.05px;color:#3c3c3c;transform:scaleX(0.870);transform-origin:left center;left:736.4px;">1.88</span><svg style="left:741.8px;top:448.1px;" width="12" height="12" viewBox="0 0 12 12"><circle cx="6" cy="6" r="4.9" fill="none" stroke="#0d0d0d" stroke-width="1.25"/><path d="M6 2.9 V6.3 H8.7" fill="none" stroke="#0d0d0d" stroke-width="1.1"/></svg><div style="left:891.1px;top:409.8px;width:21.8px;height:15.7px;background:#000;background:linear-gradient(180deg,#3a3a3a 0%,#000 14%,#000 70%,#2c2c2c 100%);"></div><svg style="left:894px;top:409.2px;" width="16" height="16" viewBox="0 0 16 16"><circle cx="8" cy="8" r="6.2" fill="#2e2e2e" stroke="#f6f6f6" stroke-width="3"/></svg><span class="t" style="top:411.55px;font-size:9px;line-height:11.7px;color:#fff;font-weight:bold;transform:scaleX(0.892);transform-origin:center center;left:702.1px;width:400px;text-align:center;"><span>D</span></span><div style="left:885.3px;top:427.9px;width:33.4px;height:18px;background:#b3b3b3;border:0.9px solid #7f7f7f;"></div><span class="t" style="top:433.575px;font-size:8.5px;line-height:11.05px;color:#3c3c3c;transform:scaleX(0.870);transform-origin:left center;left:890.6px;">1.88</span><svg style="left:896px;top:448.1px;" width="12" height="12" viewBox="0 0 12 12"><circle cx="6" cy="6" r="4.9" fill="none" stroke="#0d0d0d" stroke-width="1.25"/><path d="M6 2.9 V6.3 H8.7" fill="none" stroke="#0d0d0d" stroke-width="1.1"/></svg><div style="left:920.4px;top:388px;width:1px;height:121px;background:#a7c8ee;"></div><div style="left:921px;top:390px;width:103px;height:88.6px;background:#2c7dd4;"></div><div style="left:921px;top:390px;width:103px;height:0.9px;background:#8dbcf0;"></div><div style="left:921px;top:477.7px;width:103px;height:0.9px;background:#8dbcf0;"></div><div style="left:923.2px;top:391.6px;width:100.8px;height:41.7px;background:#e0e0e4;"></div><div style="left:935.6px;top:391.6px;width:74.6px;height:41.7px;background:#1c1c1c;"></div><div style="left:936.6px;top:392.2px;width:2px;height:40.5px;background:#f2f2f2;"></div><div style="left:1007.4px;top:392.2px;width:2px;height:40.5px;background:#f2f2f2;"></div><svg preserveAspectRatio="none" style="left:939.4px;top:391.6px;overflow:hidden;" width="67.2" height="41.7" viewBox="0 0 339.5 211.6"><rect width="339.5" height="211.6" fill="#0b0b0b"/><g filter="url(#b8)" opacity="0.2"><g transform="translate(-15.4,-6.7) scale(1.774)"><use href="#photo"/></g></g></svg><div style="left:945.8px;top:395.2px;width:54.6px;height:34.4px;background:#efefef;"></div><svg preserveAspectRatio="none" style="left:948px;top:397.4px;overflow:hidden;" width="50.2" height="30" viewBox="0 0 209 127"><use href="#photo"/></svg><span class="t" style="top:437.76px;font-size:15.6px;line-height:20.28px;color:#fff;font-weight:bold;transform:scaleX(0.921);transform-origin:left center;left:923.6px;">8</span><span class="t" style="top:442.24px;font-size:8.4px;line-height:10.92px;color:#d9e7f8;transform:scaleX(0.928);transform-origin:left center;left:937.4px;">Backdrop Dark Framed ...</span><div style="left:923.2px;top:457.6px;width:100.8px;height:18.8px;background:#1a497f;"></div><div style="left:971.2px;top:458.9px;width:34.4px;height:16.6px;background:#b3b3b3;border:0.9px solid #7f7f7f;"></div><span class="t" style="top:463.875px;font-size:8.5px;line-height:11.05px;color:#3c3c3c;transform:scaleX(0.870);transform-origin:left center;left:976.4px;">1.52</span><svg style="left:1007.8px;top:460.6px;" width="12" height="12" viewBox="0 0 12 12"><circle cx="6" cy="6" r="4.9" fill="none" stroke="#0c1c30" stroke-width="1.25"/><path d="M6 2.9 V6.3 H8.7" fill="none" stroke="#0c1c30" stroke-width="1.1"/></svg><svg style="left:929px;top:381.2px;" width="5" height="7" viewBox="0 0 5 7"><path d="M0.3 0.6 Q0.3 0 0.9 0 H4.1 Q4.7 0 4.7 0.6 V4.4 L2.5 6.8 L0.3 4.4z" fill="#0d0d0d"/></svg><svg style="left:0px;top:0px;" width="1024" height="529" viewBox="0 0 1024 529"><path d="M14 508.2 L14 508.2 L15 487.6 L16 493.5 L17 498.5 L18 492.8 L19 493.9 L20 499.9 L21 496.5 L22 497.9 L23 502.1 L24 499.5 L25 500.5 L26 501.0 L27 501.0 L28 501.3 L29 503.2 L30 502.0 L31 502.2 L32 502.6 L33 502.6 L34 504.8 L35 503.1 L36 504.0 L37 505.1 L38 503.8 L39 502.5 L40 506.0 L41 506.1 L42 507.2 L43 508.2 L44 508.2 L45 508.2 L46 508.2 L47 508.2 L48 490.7 L49 492.6 L50 494.8 L51 492.7 L52 489.7 L53 495.4 L54 494.2 L55 495.8 L56 493.6 L57 491.7 L58 492.2 L59 496.8 L60 489.7 L61 490.9 L62 490.9 L63 491.7 L64 497.9 L65 499.3 L66 492.8 L67 494.3 L68 493.6 L69 499.3 L70 494.8 L71 495.2 L72 500.3 L73 496.2 L74 496.9 L75 497.4 L76 499.8 L77 502.3 L78 497.9 L79 500.6 L80 498.9 L81 500.2 L82 500.9 L83 495.8 L84 499.6 L85 502.0 L86 505.2 L87 508.2 L88 508.2 L89 497.7 L90 486.6 L91 497.3 L92 495.8 L93 502.3 L94 502.0 L95 503.9 L96 505.1 L97 503.0 L98 497.9 L99 499.9 L100 492.8 L101 489.5 L102 486.6 L103 494.2 L104 493.8 L105 493.8 L106 491.7 L107 497.4 L108 496.9 L109 497.8 L110 498.9 L111 500.9 L112 503.1 L113 505.6 L114 505.1 L115 502.9 L116 500.0 L117 500.0 L118 498.9 L119 500.6 L120 497.9 L121 499.4 L122 495.8 L123 490.5 L124 485.5 L125 492.2 L126 489.7 L127 496.6 L128 485.5 L129 489.0 L130 492.8 L131 497.8 L132 486.6 L133 497.2 L134 490.7 L135 499.2 L136 493.8 L137 493.8 L138 491.7 L139 497.4 L140 496.9 L141 499.1 L142 500.0 L143 501.0 L144 497.9 L145 499.7 L146 501.0 L147 502.0 L148 503.1 L149 503.5 L150 504.1 L151 505.3 L152 506.1 L153 506.9 L154 507.7 L155 507.9 L156 508.2 L157 487.6 L158 489.0 L159 490.7 L160 493.0 L161 486.6 L162 496.3 L163 492.8 L164 490.7 L165 487.6 L166 497.3 L167 494.8 L168 501.2 L169 496.9 L170 497.2 L171 495.8 L172 500.2 L173 500.0 L174 500.9 L175 501.3 L176 502.0 L177 502.7 L178 503.2 L179 505.6 L180 504.1 L181 504.3 L182 505.4 L183 506.1 L184 505.1 L185 505.4 L186 505.6 L187 505.9 L188 506.1 L189 498.6 L190 485.5 L191 497.9 L192 503.2 L193 503.1 L194 504.0 L195 504.5 L196 505.1 L197 505.5 L198 505.9 L199 506.3 L200 506.7 L201 506.9 L202 507.1 L203 507.3 L204 507.5 L205 507.7 L206 507.2 L207 506.7 L208 506.1 L209 506.7 L210 507.2 L211 507.7 L212 508.2 L213 487.6 L214 489.5 L215 491.7 L216 493.6 L217 495.8 L218 497.4 L219 492.8 L220 495.2 L221 497.9 L222 500.3 L223 493.8 L224 490.5 L225 487.6 L226 497.6 L227 495.8 L228 497.3 L229 486.6 L230 493.3 L231 497.9 L232 492.6 L233 487.6 L234 494.2 L235 500.0 L236 502.9 L237 502.9 L238 504.1 L239 505.3 L240 506.1 L241 486.6 L242 490.9 L243 492.8 L244 495.2 L245 497.9 L246 501.0 L247 500.0 L248 502.3 L249 502.9 L250 502.0 L251 501.6 L252 501.5 L253 501.0 L254 503.6 L255 499.6 L256 497.9 L257 500.0 L258 501.0 L259 504.7 L260 503.1 L261 505.6 L262 505.1 L263 506.1 L264 501.3 L265 488.6 L266 490.2 L267 490.7 L268 495.3 L269 485.5 L270 495.0 L271 489.7 L272 496.6 L273 485.5 L274 497.5 L275 492.8 L276 497.6 L277 490.7 L278 494.2 L279 496.9 L280 495.7 L281 493.8 L282 499.6 L283 495.8 L284 496.7 L285 501.2 L286 495.8 L287 500.7 L288 497.5 L289 497.9 L290 500.7 L291 503.2 L292 500.0 L293 500.5 L294 503.4 L295 501.0 L296 502.4 L297 505.3 L298 504.1 L299 495.2 L300 486.6 L301 495.8 L302 496.2 L303 494.8 L304 500.5 L305 499.2 L306 493.8 L307 496.6 L308 492.8 L309 494.8 L310 494.8 L311 495.7 L312 497.2 L313 497.9 L314 498.2 L315 500.2 L316 497.9 L317 498.3 L318 497.5 L319 496.9 L320 500.6 L321 495.8 L322 487.6 L323 491.4 L324 485.5 L325 488.5 L326 488.6 L327 487.4 L328 486.6 L329 490.0 L330 493.8 L331 499.2 L332 490.7 L333 497.4 L334 497.9 L335 501.4 L336 501.0 L337 500.5 L338 498.9 L339 501.5 L340 493.8 L341 494.2 L342 486.6 L343 496.9 L344 489.7 L345 498.6 L346 492.8 L347 494.7 L348 495.8 L349 493.1 L350 490.7 L351 500.0 L352 485.5 L353 500.0 L354 497.7 L355 494.8 L356 502.6 L357 504.1 L358 505.3 L359 502.0 L360 496.2 L361 489.7 L362 485.5 L363 488.7 L364 490.7 L365 492.6 L366 494.8 L367 501.8 L368 498.9 L369 503.2 L370 502.0 L371 503.7 L372 505.1 L373 507.2 L374 498.2 L375 488.6 L376 491.4 L377 491.7 L378 491.9 L379 489.7 L380 493.2 L381 495.8 L382 495.7 L383 493.8 L384 500.3 L385 497.9 L386 499.2 L387 500.0 L388 504.1 L389 502.0 L390 503.7 L391 505.1 L392 503.1 L393 505.3 L394 505.3 L395 505.1 L396 505.2 L397 506.2 L398 505.1 L399 505.4 L400 505.6 L401 505.9 L402 506.1 L403 506.1 L404 506.1 L405 506.1 L406 506.1 L407 496.2 L408 485.5 L409 497.9 L410 503.2 L411 503.1 L412 504.0 L413 505.1 L414 505.5 L415 505.8 L416 506.1 L417 506.5 L418 506.9 L419 507.3 L420 507.7 L421 507.8 L422 507.9 L423 508.0 L424 508.1 L425 508.2 L426 508.2 L427 508.2 L428 508.2 L429 508.2 L430 508.2 L431 504.1 L432 506.1 L433 508.2 L434 508.2 L435 508.2 L436 508.2 L437 508.2 L438 508.2 L439 508.2 L440 508.2 L441 508.2 L442 487.6 L443 491.8 L444 486.6 L445 496.0 L446 491.7 L447 497.0 L448 489.7 L449 499.5 L450 495.8 L451 498.1 L452 498.9 L453 499.7 L454 500.0 L455 501.2 L456 502.0 L457 503.0 L458 504.1 L459 505.5 L460 505.5 L461 506.1 L462 504.1 L463 496.2 L464 490.7 L465 491.0 L466 491.7 L467 497.8 L468 487.6 L469 490.5 L470 493.8 L471 498.3 L472 487.6 L473 500.1 L474 500.0 L475 502.2 L476 504.1 L477 504.7 L478 505.1 L479 496.7 L480 487.6 L481 489.0 L482 490.7 L483 496.6 L484 495.8 L485 501.8 L486 497.9 L487 497.2 L488 495.8 L489 497.8 L490 493.8 L491 494.6 L492 487.6 L493 491.8 L494 486.6 L495 490.0 L496 490.7 L497 492.6 L498 494.8 L499 496.2 L500 495.8 L501 496.0 L502 499.4 L503 493.8 L504 497.3 L505 500.5 L506 494.8 L507 497.5 L508 495.1 L509 493.8 L510 499.4 L511 496.0 L512 495.8 L513 494.7 L514 493.8 L515 490.2 L516 485.5 L517 493.8 L518 496.2 L519 496.9 L520 497.3 L521 497.9 L522 498.9 L523 498.9 L524 498.9 L525 503.6 L526 501.5 L527 502.0 L528 500.7 L529 498.9 L530 502.5 L531 502.7 L532 500.0 L533 503.6 L534 500.5 L535 500.0 L536 500.2 L537 499.2 L538 498.9 L539 486.6 L540 491.8 L541 487.6 L542 488.0 L543 485.5 L544 497.2 L545 491.7 L546 491.9 L547 489.7 L548 497.6 L549 493.8 L550 492.6 L551 491.7 L552 493.1 L553 494.8 L554 493.6 L555 492.8 L556 499.6 L557 496.9 L558 497.2 L559 495.8 L560 497.2 L561 497.9 L562 499.3 L563 490.7 L564 493.7 L565 495.8 L566 495.7 L567 494.8 L568 495.2 L569 495.8 L570 496.7 L571 496.9 L572 500.7 L573 492.8 L574 486.6 L575 486.7 L576 485.5 L577 491.0 L578 486.6 L579 498.1 L580 493.8 L581 492.4 L582 488.6 L583 491.0 L584 493.8 L585 490.5 L586 487.6 L587 490.5 L588 493.8 L589 498.3 L590 491.7 L591 485.5 L592 497.6 L593 497.9 L594 499.2 L595 500.0 L596 500.4 L597 501.0 L598 500.4 L599 487.6 L600 496.3 L601 486.6 L602 495.3 L603 489.7 L604 498.0 L605 494.8 L606 501.5 L607 497.9 L608 497.2 L609 495.8 L610 492.7 L611 488.6 L612 496.6 L613 486.6 L614 489.7 L615 491.7 L616 494.8 L617 495.8 L618 497.7 L619 498.9 L620 499.9 L621 501.0 L622 504.7 L623 503.1 L624 504.6 L625 504.1 L626 495.7 L627 487.6 L628 498.3 L629 493.8 L630 500.6 L631 498.9 L632 501.0 L633 502.0 L634 502.5 L635 505.1 L636 503.1 L637 503.0 L638 504.2 L639 503.2 L640 503.1 L641 503.6 L642 504.6 L643 503.8 L644 504.1 L645 504.6 L646 504.8 L647 506.1 L648 505.1 L649 505.2 L650 505.4 L651 505.5 L652 505.6 L653 506.4 L654 507.2 L655 504.1 L656 506.1 L657 508.2 L658 508.2 L659 508.2 L660 508.2 L661 508.2 L662 508.2 L663 508.2 L664 508.2 L665 508.2 L666 508.2 L667 486.6 L668 491.4 L669 493.8 L670 495.2 L671 495.8 L672 497.6 L673 487.6 L674 496.2 L675 497.9 L676 498.1 L677 496.9 L678 500.9 L679 493.8 L680 494.2 L681 494.8 L682 498.3 L683 490.7 L684 497.2 L685 486.6 L686 496.0 L687 491.7 L688 492.4 L689 490.7 L690 495.8 L691 493.8 L692 495.7 L693 495.8 L694 499.6 L695 493.8 L696 495.7 L697 496.9 L698 501.2 L699 494.8 L700 502.1 L701 500.0 L702 504.4 L703 503.1 L704 505.6 L705 505.1 L706 503.2 L707 495.8 L708 485.5 L709 489.5 L710 493.8 L711 498.3 L712 491.7 L713 498.1 L714 488.6 L715 499.8 L716 497.9 L717 498.8 L718 500.0 L719 497.8 L720 495.8 L721 487.6 L722 492.8 L723 495.8 L724 500.6 L725 501.0 L726 504.6 L727 504.1 L728 504.1 L729 497.9 L730 486.6 L731 496.3 L732 492.8 L733 497.7 L734 502.0 L735 503.9 L736 505.1 L737 498.6 L738 486.6 L739 495.7 L740 485.5 L741 495.3 L742 490.7 L743 499.8 L744 495.8 L745 494.2 L746 492.8 L747 500.9 L748 497.9 L749 493.3 L750 486.6 L751 487.6 L752 485.5 L753 496.6 L754 489.7 L755 492.7 L756 494.8 L757 500.1 L758 492.8 L759 498.2 L760 497.9 L761 492.6 L762 487.6 L763 498.1 L764 492.8 L765 494.2 L766 495.8 L767 501.8 L768 497.9 L769 498.5 L770 498.5 L771 498.9 L772 499.5 L773 500.2 L774 500.0 L775 503.4 L776 503.2 L777 498.9 L778 487.6 L779 495.7 L780 489.7 L781 490.7 L782 490.7 L783 493.0 L784 486.6 L785 485.5 L786 490.9 L787 493.8 L788 494.7 L789 495.8 L790 488.6 L791 497.8 L792 490.7 L793 492.8 L794 492.8 L795 499.0 L796 494.8 L797 497.4 L798 493.8 L799 497.8 L800 495.8 L801 500.6 L802 496.9 L803 497.2 L804 495.8 L805 499.8 L806 498.9 L807 500.0 L808 500.0 L809 491.7 L810 499.0 L811 495.8 L812 497.2 L813 496.9 L814 497.7 L815 497.9 L816 498.8 L817 500.0 L818 500.4 L819 501.0 L820 504.4 L821 502.0 L822 498.6 L823 493.8 L824 486.6 L825 494.0 L826 485.5 L827 495.3 L828 490.7 L829 488.4 L830 486.6 L831 491.4 L832 493.8 L833 496.2 L834 491.7 L835 486.6 L836 491.0 L837 495.8 L838 494.7 L839 493.8 L840 500.7 L841 495.8 L842 499.0 L843 496.9 L844 502.1 L845 497.9 L846 499.8 L847 496.9 L848 500.2 L849 498.9 L850 499.4 L851 500.0 L852 489.7 L853 493.3 L854 494.8 L855 498.2 L856 495.8 L857 496.7 L858 496.9 L859 497.3 L860 497.9 L861 499.1 L862 498.9 L863 500.0 L864 500.0 L865 502.2 L866 501.0 L867 499.6 L868 488.6 L869 491.9 L870 492.8 L871 494.8 L872 494.8 L873 497.2 L874 497.9 L875 498.8 L876 500.0 L877 501.0 L878 501.0 L879 502.2 L880 503.1 L881 503.9 L882 504.1 L883 505.9 L884 505.1 L885 497.7 L886 489.7 L887 486.6 L888 487.4 L889 488.6 L890 497.0 L891 498.9 L892 502.9 L893 501.0 L894 504.4 L895 502.0 L896 499.9 L897 497.9 L898 485.5 L899 491.0 L900 486.6 L901 490.7 L902 493.8 L903 497.6 L904 500.0 L905 501.4 L906 503.1 L907 503.7 L908 504.1 L909 505.4 L910 505.1 L911 484.5 L912 495.8 L913 504.1 L914 505.3 L915 506.1 L916 506.5 L917 506.8 L918 507.2 L919 507.4 L920 507.7 L921 507.9 L922 508.2 L923 508.2 L924 508.2 L925 508.2 L926 489.7 L927 490.5 L928 491.7 L929 500.1 L930 495.8 L931 492.8 L932 495.7 L933 497.9 L934 501.0 L935 500.0 L936 499.7 L937 498.9 L938 501.5 L939 503.1 L940 504.6 L941 504.1 L942 505.9 L943 505.1 L944 505.6 L945 506.1 L946 506.7 L947 506.8 L948 507.0 L949 507.2 L950 506.8 L951 506.5 L952 506.1 L953 506.5 L954 506.8 L955 507.2 L956 507.3 L957 507.4 L958 507.5 L959 507.6 L960 507.7 L961 507.8 L962 507.9 L963 508.1 L964 508.2 L965 487.6 L966 488.5 L967 486.6 L968 493.4 L969 491.7 L970 496.0 L971 486.6 L972 491.2 L973 494.8 L974 500.6 L975 497.9 L976 487.6 L977 491.2 L978 493.8 L979 496.7 L980 497.9 L981 501.0 L982 500.0 L983 504.4 L984 503.1 L985 504.6 L986 504.1 L987 504.6 L988 505.1 L989 505.1 L990 505.1 L991 501.8 L992 488.6 L993 496.3 L994 490.7 L995 492.6 L996 494.8 L997 499.0 L998 497.9 L999 500.6 L1000 498.9 L1001 500.2 L1002 501.0 L1003 502.2 L1004 503.2 L1005 504.1 L1006 505.8 L1007 506.3 L1008 505.1 L1009 505.2 L1010 505.4 L1011 505.5 L1012 505.6 L1013 505.8 L1014 505.9 L1015 506.0 L1016 506.1 L1017 496.7 L1018 486.6 L1019 494.0 L1020 485.5 L1021 496.6 L1022 489.7 L1023 492.8 L1024 493.8 L1024 508.2Z" fill="#1626a6"/><path d="M14 508.2 L14 508.2 L15 495.4 L16 495.4 L17 499.9 L18 495.7 L19 495.7 L20 501.2 L21 499.3 L22 499.3 L23 503.2 L24 501.6 L25 501.6 L26 502.1 L27 502.1 L28 502.4 L29 504.1 L30 503.2 L31 503.2 L32 503.6 L33 503.6 L34 505.5 L35 504.9 L36 504.9 L37 505.8 L38 504.6 L39 504.6 L40 506.6 L41 506.7 L42 507.7 L43 508.2 L44 508.2 L45 508.2 L46 508.2 L47 508.2 L48 494.6 L49 494.6 L50 496.5 L51 494.6 L52 494.6 L53 497.1 L54 497.1 L55 497.5 L56 495.5 L57 494.2 L58 494.2 L59 498.3 L60 493.0 L61 493.0 L62 493.0 L63 493.8 L64 499.3 L65 500.6 L66 496.1 L67 496.1 L68 496.1 L69 500.6 L70 496.9 L71 496.9 L72 501.5 L73 498.4 L74 498.4 L75 498.9 L76 501.0 L77 503.2 L78 501.8 L79 501.8 L80 501.4 L81 501.4 L82 502.1 L83 500.8 L84 500.8 L85 503.0 L86 505.9 L87 508.2 L88 508.2 L89 499.1 L90 498.8 L91 498.8 L92 498.8 L93 503.3 L94 503.3 L95 504.7 L96 505.8 L97 503.9 L98 501.2 L99 501.2 L100 494.7 L101 491.8 L102 491.8 L103 496.0 L104 495.6 L105 495.6 L106 495.6 L107 498.9 L108 498.9 L109 499.2 L110 500.3 L111 502.0 L112 504.0 L113 506.2 L114 505.8 L115 503.8 L116 501.3 L117 501.3 L118 501.3 L119 501.8 L120 500.7 L121 500.7 L122 497.5 L123 492.7 L124 492.7 L125 494.2 L126 494.2 L127 498.2 L128 491.3 L129 491.3 L130 494.7 L131 499.2 L132 498.7 L133 498.7 L134 498.7 L135 500.5 L136 495.6 L137 495.6 L138 495.6 L139 498.9 L140 498.9 L141 500.4 L142 501.2 L143 502.1 L144 500.9 L145 500.9 L146 502.1 L147 503.0 L148 504.0 L149 504.4 L150 504.9 L151 506.0 L152 506.7 L153 507.4 L154 508.1 L155 508.2 L156 508.2 L157 491.3 L158 491.3 L159 492.8 L160 494.9 L161 494.9 L162 497.9 L163 494.7 L164 492.8 L165 492.8 L166 498.8 L167 498.8 L168 502.3 L169 498.7 L170 498.7 L171 498.7 L172 501.4 L173 501.4 L174 502.0 L175 502.4 L176 503.0 L177 503.6 L178 504.1 L179 506.3 L180 505.1 L181 505.1 L182 506.1 L183 506.7 L184 506.1 L185 506.1 L186 506.3 L187 506.5 L188 506.7 L189 500.0 L190 499.3 L191 499.3 L192 504.1 L193 504.1 L194 504.9 L195 505.3 L196 505.8 L197 506.2 L198 506.5 L199 506.9 L200 507.2 L201 507.4 L202 507.6 L203 507.8 L204 508.0 L205 508.1 L206 507.7 L207 507.2 L208 507.2 L209 507.2 L210 507.7 L211 508.1 L212 508.2 L213 491.8 L214 491.8 L215 493.8 L216 495.5 L217 497.5 L218 498.9 L219 496.9 L220 496.9 L221 499.3 L222 501.5 L223 495.6 L224 492.7 L225 492.7 L226 499.1 L227 498.8 L228 498.8 L229 495.2 L230 495.2 L231 499.3 L232 494.6 L233 494.6 L234 496.0 L235 501.2 L236 503.8 L237 503.8 L238 504.9 L239 506.0 L240 506.7 L241 493.0 L242 493.0 L243 494.7 L244 496.9 L245 499.3 L246 502.1 L247 502.1 L248 503.3 L249 503.8 L250 503.0 L251 502.7 L252 502.6 L253 502.6 L254 504.4 L255 500.8 L256 500.8 L257 501.3 L258 502.1 L259 505.5 L260 505.5 L261 506.2 L262 506.2 L263 506.7 L264 502.4 L265 492.4 L266 492.4 L267 492.8 L268 497.0 L269 496.7 L270 496.7 L271 496.7 L272 498.2 L273 498.2 L274 498.9 L275 498.9 L276 499.1 L277 496.0 L278 496.0 L279 498.4 L280 497.3 L281 497.3 L282 500.9 L283 498.2 L284 498.2 L285 502.3 L286 501.9 L287 501.9 L288 499.3 L289 499.3 L290 501.9 L291 504.1 L292 501.7 L293 501.7 L294 504.2 L295 503.4 L296 503.4 L297 506.0 L298 504.9 L299 496.9 L300 496.9 L301 497.5 L302 497.8 L303 497.8 L304 501.6 L305 500.5 L306 498.2 L307 498.2 L308 496.5 L309 496.5 L310 496.5 L311 497.4 L312 498.7 L313 499.3 L314 499.6 L315 501.4 L316 499.7 L317 499.7 L318 499.0 L319 499.0 L320 501.8 L321 497.5 L322 493.5 L323 493.5 L324 490.9 L325 490.9 L326 491.0 L327 489.9 L328 489.9 L329 492.2 L330 495.6 L331 500.5 L332 498.9 L333 498.9 L334 499.3 L335 502.5 L336 502.1 L337 501.7 L338 501.7 L339 502.6 L340 496.0 L341 496.0 L342 496.0 L343 498.4 L344 498.4 L345 500.0 L346 496.4 L347 496.4 L348 497.5 L349 495.0 L350 495.0 L351 501.2 L352 501.2 L353 501.2 L354 499.1 L355 499.1 L356 503.6 L357 504.9 L358 506.0 L359 503.0 L360 497.8 L361 491.9 L362 491.1 L363 491.1 L364 492.8 L365 494.6 L366 496.5 L367 502.9 L368 502.9 L369 504.1 L370 504.1 L371 504.6 L372 505.8 L373 507.7 L374 499.6 L375 493.5 L376 493.5 L377 493.8 L378 493.9 L379 493.9 L380 495.1 L381 497.5 L382 497.4 L383 497.4 L384 501.5 L385 500.5 L386 500.5 L387 501.2 L388 504.9 L389 504.5 L390 504.5 L391 505.8 L392 505.8 L393 506.0 L394 506.0 L395 505.9 L396 505.9 L397 506.8 L398 506.1 L399 506.1 L400 506.3 L401 506.5 L402 506.7 L403 506.7 L404 506.7 L405 506.7 L406 506.7 L407 497.8 L408 497.8 L409 499.3 L410 504.1 L411 504.1 L412 504.9 L413 505.8 L414 506.1 L415 506.4 L416 506.7 L417 507.1 L418 507.4 L419 507.8 L420 508.1 L421 508.2 L422 508.2 L423 508.2 L424 508.2 L425 508.2 L426 508.2 L427 508.2 L428 508.2 L429 508.2 L430 508.2 L431 506.7 L432 506.7 L433 508.2 L434 508.2 L435 508.2 L436 508.2 L437 508.2 L438 508.2 L439 508.2 L440 508.2 L441 508.2 L442 493.8 L443 493.8 L444 493.8 L445 497.6 L446 497.6 L447 498.5 L448 498.5 L449 500.8 L450 499.5 L451 499.5 L452 500.3 L453 500.9 L454 501.2 L455 502.3 L456 503.0 L457 503.9 L458 504.9 L459 506.2 L460 506.2 L461 506.7 L462 504.9 L463 497.8 L464 493.2 L465 493.2 L466 493.8 L467 499.2 L468 492.7 L469 492.7 L470 495.6 L471 499.7 L472 499.7 L473 501.3 L474 501.3 L475 503.2 L476 504.9 L477 505.4 L478 505.8 L479 498.2 L480 491.3 L481 491.3 L482 492.8 L483 498.2 L484 498.2 L485 502.9 L486 499.3 L487 498.7 L488 498.7 L489 499.2 L490 496.4 L491 496.4 L492 493.8 L493 493.8 L494 492.2 L495 492.2 L496 492.8 L497 494.6 L498 496.5 L499 497.8 L500 497.7 L501 497.7 L502 500.7 L503 498.8 L504 498.8 L505 501.6 L506 499.0 L507 499.0 L508 496.8 L509 496.8 L510 500.7 L511 497.7 L512 497.5 L513 496.4 L514 495.6 L515 492.4 L516 492.4 L517 495.6 L518 497.8 L519 498.4 L520 498.8 L521 499.3 L522 500.2 L523 500.2 L524 500.3 L525 504.4 L526 503.0 L527 503.0 L528 501.8 L529 501.8 L530 503.5 L531 503.6 L532 503.6 L533 504.4 L534 501.7 L535 501.4 L536 501.4 L537 500.5 L538 500.3 L539 493.8 L540 493.8 L541 490.5 L542 490.5 L543 490.5 L544 498.7 L545 493.9 L546 493.9 L547 493.9 L548 499.1 L549 495.6 L550 494.6 L551 494.6 L552 495.0 L553 496.5 L554 495.5 L555 495.5 L556 500.9 L557 498.7 L558 498.7 L559 498.7 L560 498.7 L561 499.3 L562 500.6 L563 495.6 L564 495.6 L565 497.5 L566 497.3 L567 496.9 L568 496.9 L569 497.5 L570 498.2 L571 498.4 L572 501.8 L573 494.7 L574 489.2 L575 489.2 L576 489.2 L577 493.1 L578 493.1 L579 499.5 L580 495.6 L581 494.3 L582 493.2 L583 493.2 L584 495.6 L585 492.7 L586 492.7 L587 492.7 L588 495.6 L589 499.7 L590 493.8 L591 493.8 L592 499.1 L593 499.3 L594 500.5 L595 501.2 L596 501.6 L597 502.1 L598 501.6 L599 497.9 L600 497.9 L601 497.0 L602 497.0 L603 497.0 L604 499.4 L605 499.4 L606 502.6 L607 499.3 L608 498.7 L609 497.5 L610 494.6 L611 494.6 L612 498.2 L613 491.9 L614 491.9 L615 493.8 L616 496.5 L617 497.5 L618 499.1 L619 500.3 L620 501.1 L621 502.1 L622 505.5 L623 505.4 L624 505.4 L625 504.9 L626 497.4 L627 497.4 L628 499.7 L629 499.7 L630 501.8 L631 501.8 L632 502.1 L633 503.0 L634 503.5 L635 505.8 L636 504.0 L637 504.0 L638 505.0 L639 504.1 L640 504.1 L641 504.5 L642 505.4 L643 504.9 L644 504.9 L645 505.4 L646 505.6 L647 506.7 L648 505.9 L649 505.9 L650 506.1 L651 506.2 L652 506.3 L653 507.0 L654 507.7 L655 506.7 L656 506.7 L657 508.2 L658 508.2 L659 508.2 L660 508.2 L661 508.2 L662 508.2 L663 508.2 L664 508.2 L665 508.2 L666 508.2 L667 493.5 L668 493.5 L669 495.6 L670 496.9 L671 497.5 L672 499.1 L673 497.8 L674 497.8 L675 499.3 L676 499.5 L677 499.5 L678 502.1 L679 496.0 L680 496.0 L681 496.5 L682 499.7 L683 498.7 L684 498.7 L685 497.6 L686 497.6 L687 494.3 L688 494.3 L689 494.3 L690 497.4 L691 497.4 L692 497.4 L693 497.5 L694 500.9 L695 497.3 L696 497.3 L697 498.4 L698 502.3 L699 502.3 L700 503.1 L701 503.1 L702 505.2 L703 505.2 L704 506.2 L705 505.8 L706 504.1 L707 497.5 L708 491.8 L709 491.8 L710 495.6 L711 499.7 L712 499.5 L713 499.5 L714 499.5 L715 501.0 L716 500.2 L717 500.2 L718 501.2 L719 499.2 L720 497.5 L721 494.8 L722 494.8 L723 497.5 L724 501.8 L725 502.1 L726 505.3 L727 504.9 L728 504.9 L729 499.3 L730 497.9 L731 497.9 L732 497.9 L733 499.1 L734 503.0 L735 504.7 L736 505.8 L737 500.0 L738 497.4 L739 497.4 L740 497.0 L741 497.0 L742 497.0 L743 501.0 L744 497.5 L745 496.0 L746 496.0 L747 502.1 L748 499.3 L749 495.2 L750 490.0 L751 490.0 L752 490.0 L753 498.2 L754 494.6 L755 494.6 L756 496.5 L757 501.3 L758 499.6 L759 499.6 L760 499.3 L761 494.6 L762 494.6 L763 499.5 L764 496.0 L765 496.0 L766 497.5 L767 502.9 L768 499.9 L769 499.9 L770 499.9 L771 500.3 L772 500.8 L773 501.4 L774 501.4 L775 504.2 L776 504.1 L777 500.3 L778 497.3 L779 497.3 L780 492.8 L781 492.8 L782 492.8 L783 494.9 L784 489.1 L785 489.1 L786 493.0 L787 495.6 L788 496.4 L789 497.5 L790 497.5 L791 499.2 L792 494.8 L793 494.8 L794 494.8 L795 500.3 L796 498.9 L797 498.9 L798 498.9 L799 499.2 L800 499.2 L801 501.8 L802 498.7 L803 498.7 L804 498.7 L805 501.0 L806 501.0 L807 501.3 L808 501.2 L809 500.3 L810 500.3 L811 498.7 L812 498.7 L813 498.7 L814 499.1 L815 499.3 L816 500.2 L817 501.2 L818 501.6 L819 502.1 L820 505.2 L821 503.0 L822 500.0 L823 495.6 L824 495.6 L825 495.8 L826 495.8 L827 497.0 L828 492.8 L829 490.8 L830 490.8 L831 493.5 L832 495.6 L833 497.8 L834 493.8 L835 493.2 L836 493.2 L837 497.5 L838 496.4 L839 496.4 L840 501.8 L841 500.3 L842 500.3 L843 500.3 L844 503.1 L845 501.0 L846 501.0 L847 501.0 L848 501.4 L849 500.6 L850 500.6 L851 501.2 L852 495.2 L853 495.2 L854 496.5 L855 499.6 L856 498.2 L857 498.2 L858 498.4 L859 498.8 L860 499.3 L861 500.4 L862 500.4 L863 501.3 L864 501.3 L865 503.2 L866 502.1 L867 500.9 L868 493.9 L869 493.9 L870 494.7 L871 496.5 L872 496.5 L873 498.7 L874 499.3 L875 500.2 L876 501.2 L877 502.1 L878 502.1 L879 503.2 L880 504.0 L881 504.7 L882 504.9 L883 506.5 L884 505.8 L885 499.1 L886 491.9 L887 489.9 L888 489.9 L889 491.0 L890 498.5 L891 500.3 L892 503.8 L893 503.8 L894 505.2 L895 503.0 L896 501.1 L897 499.3 L898 493.1 L899 493.1 L900 492.8 L901 492.8 L902 495.6 L903 499.1 L904 501.2 L905 502.5 L906 504.0 L907 504.6 L908 504.9 L909 506.1 L910 505.8 L911 497.5 L912 497.5 L913 504.9 L914 506.0 L915 506.7 L916 507.1 L917 507.4 L918 507.7 L919 507.9 L920 508.1 L921 508.2 L922 508.2 L923 508.2 L924 508.2 L925 508.2 L926 492.7 L927 492.7 L928 493.8 L929 501.3 L930 497.5 L931 497.3 L932 497.3 L933 499.3 L934 502.1 L935 501.2 L936 500.9 L937 500.9 L938 502.6 L939 504.0 L940 505.4 L941 505.4 L942 506.5 L943 506.3 L944 506.3 L945 506.7 L946 507.2 L947 507.4 L948 507.5 L949 507.7 L950 507.4 L951 507.1 L952 507.1 L953 507.1 L954 507.4 L955 507.7 L956 507.8 L957 507.9 L958 508.0 L959 508.0 L960 508.1 L961 508.2 L962 508.2 L963 508.2 L964 508.2 L965 490.9 L966 490.9 L967 490.9 L968 495.3 L969 495.3 L970 497.6 L971 493.3 L972 493.3 L973 496.5 L974 501.8 L975 499.3 L976 493.3 L977 493.3 L978 495.6 L979 498.2 L980 499.3 L981 502.1 L982 502.1 L983 505.2 L984 505.2 L985 505.4 L986 505.3 L987 505.3 L988 505.8 L989 505.8 L990 505.8 L991 502.9 L992 497.9 L993 497.9 L994 494.6 L995 494.6 L996 496.5 L997 500.3 L998 500.3 L999 501.8 L1000 501.4 L1001 501.4 L1002 502.1 L1003 503.2 L1004 504.1 L1005 504.9 L1006 506.4 L1007 506.9 L1008 505.9 L1009 505.9 L1010 506.1 L1011 506.2 L1012 506.3 L1013 506.4 L1014 506.5 L1015 506.6 L1016 506.7 L1017 498.2 L1018 495.8 L1019 495.8 L1020 495.8 L1021 498.2 L1022 494.8 L1023 494.8 L1024 495.6 L1024 508.2Z" fill="#1349d8"/><path d="M14 508.2 L14 508.2 L15 501.7 L16 501.7 L17 501.7 L18 501.7 L19 501.7 L20 502.7 L21 502.7 L22 502.7 L23 504.4 L24 503.5 L25 503.5 L26 503.5 L27 503.8 L28 504.3 L29 505.2 L30 504.7 L31 504.7 L32 504.7 L33 505.1 L34 506.4 L35 506.4 L36 506.4 L37 506.7 L38 506.7 L39 507.3 L40 507.4 L41 508.2 L42 508.2 L43 508.2 L44 508.2 L45 508.2 L46 508.2 L47 508.2 L48 508.2 L49 498.8 L50 498.8 L51 498.8 L52 498.8 L53 499.3 L54 499.3 L55 499.6 L56 498.4 L57 499.6 L58 497.9 L59 500.3 L60 496.8 L61 496.5 L62 496.5 L63 501.1 L64 501.1 L65 502.2 L66 501.1 L67 502.2 L68 498.8 L69 502.2 L70 502.2 L71 502.2 L72 503.0 L73 500.8 L74 502.6 L75 502.6 L76 502.6 L77 504.5 L78 503.2 L79 503.2 L80 503.2 L81 503.2 L82 503.5 L83 503.5 L84 504.3 L85 506.7 L86 508.2 L87 508.2 L88 508.2 L89 508.2 L90 501.0 L91 501.0 L92 504.3 L93 504.5 L94 505.7 L95 505.7 L96 506.7 L97 505.7 L98 505.0 L99 502.7 L100 501.2 L101 498.4 L102 498.0 L103 498.4 L104 498.1 L105 498.4 L106 500.4 L107 500.8 L108 501.1 L109 502.0 L110 503.5 L111 505.1 L112 506.7 L113 507.0 L114 506.7 L115 506.7 L116 505.0 L117 503.2 L118 502.8 L119 503.2 L120 502.3 L121 502.3 L122 501.2 L123 499.6 L124 496.8 L125 496.8 L126 496.8 L127 500.2 L128 497.3 L129 500.2 L130 497.3 L131 501.1 L132 500.6 L133 501.1 L134 500.6 L135 502.2 L136 498.1 L137 500.8 L138 500.4 L139 500.8 L140 502.1 L141 502.7 L142 502.7 L143 503.5 L144 503.5 L145 503.5 L146 504.3 L147 505.1 L148 505.4 L149 505.9 L150 506.8 L151 507.4 L152 508.0 L153 508.2 L154 508.2 L155 508.2 L156 508.2 L157 508.2 L158 497.4 L159 495.7 L160 497.4 L161 497.4 L162 500.0 L163 497.3 L164 500.0 L165 498.8 L166 500.7 L167 500.7 L168 503.7 L169 500.6 L170 502.9 L171 502.7 L172 502.9 L173 503.4 L174 503.7 L175 504.3 L176 504.8 L177 505.2 L178 505.9 L179 507.0 L180 506.9 L181 507.0 L182 506.9 L183 507.4 L184 507.0 L185 507.2 L186 507.2 L187 507.2 L188 507.4 L189 507.2 L190 505.2 L191 505.1 L192 505.2 L193 505.8 L194 506.2 L195 506.7 L196 506.9 L197 507.2 L198 507.5 L199 507.8 L200 508.0 L201 508.1 L202 508.2 L203 508.2 L204 508.2 L205 508.2 L206 508.2 L207 508.2 L208 508.2 L209 508.2 L210 508.2 L211 508.2 L212 508.2 L213 508.2 L214 497.9 L215 497.9 L216 499.6 L217 499.6 L218 500.8 L219 500.8 L220 501.2 L221 501.2 L222 503.0 L223 501.2 L224 501.0 L225 499.6 L226 501.0 L227 500.7 L228 500.7 L229 500.7 L230 500.7 L231 501.2 L232 498.4 L233 501.2 L234 502.7 L235 504.9 L236 504.9 L237 505.9 L238 506.8 L239 506.8 L240 507.4 L241 506.8 L242 499.1 L243 499.1 L244 501.2 L245 502.7 L246 503.5 L247 504.5 L248 504.5 L249 504.9 L250 504.5 L251 504.3 L252 504.3 L253 504.0 L254 505.5 L255 503.5 L256 503.5 L257 503.5 L258 505.1 L259 506.4 L260 506.6 L261 507.0 L262 507.0 L263 507.4 L264 506.6 L265 503.7 L266 499.2 L267 495.7 L268 499.2 L269 499.0 L270 499.2 L271 499.0 L272 500.2 L273 500.2 L274 500.8 L275 500.8 L276 501.0 L277 500.4 L278 500.4 L279 500.4 L280 500.4 L281 500.4 L282 502.5 L283 502.5 L284 502.5 L285 503.7 L286 503.3 L287 503.3 L288 503.3 L289 503.3 L290 503.3 L291 505.2 L292 505.2 L293 505.2 L294 505.3 L295 505.3 L296 505.9 L297 506.8 L298 505.9 L299 505.9 L300 499.9 L301 499.6 L302 499.9 L303 502.1 L304 503.1 L305 502.1 L306 502.1 L307 500.2 L308 498.8 L309 499.5 L310 499.5 L311 500.6 L312 501.2 L313 501.4 L314 501.4 L315 502.9 L316 501.5 L317 501.5 L318 501.5 L319 501.5 L320 503.2 L321 500.4 L322 499.6 L323 496.2 L324 494.1 L325 494.1 L326 494.1 L327 494.1 L328 495.2 L329 498.0 L330 498.0 L331 502.2 L332 501.2 L333 502.2 L334 503.5 L335 503.8 L336 503.5 L337 503.8 L338 503.5 L339 503.9 L340 502.0 L341 500.4 L342 498.4 L343 500.4 L344 500.4 L345 501.7 L346 499.6 L347 499.6 L348 499.6 L349 499.6 L350 499.6 L351 502.7 L352 502.7 L353 502.7 L354 502.7 L355 504.7 L356 505.9 L357 505.9 L358 506.8 L359 505.9 L360 504.3 L361 499.9 L362 495.7 L363 495.7 L364 497.1 L365 498.8 L366 502.0 L367 504.2 L368 504.3 L369 505.2 L370 505.6 L371 506.7 L372 506.7 L373 508.2 L374 506.7 L375 501.4 L376 496.6 L377 496.5 L378 496.6 L379 497.6 L380 499.5 L381 499.6 L382 499.6 L383 501.2 L384 503.0 L385 502.7 L386 503.0 L387 504.3 L388 505.9 L389 505.9 L390 505.9 L391 506.6 L392 506.8 L393 506.8 L394 506.8 L395 506.8 L396 506.8 L397 507.5 L398 507.0 L399 507.2 L400 507.2 L401 507.4 L402 507.4 L403 507.4 L404 507.4 L405 507.4 L406 507.4 L407 507.4 L408 505.2 L409 505.1 L410 505.2 L411 505.8 L412 506.7 L413 506.9 L414 507.2 L415 507.4 L416 507.7 L417 508.0 L418 508.2 L419 508.2 L420 508.2 L421 508.2 L422 508.2 L423 508.2 L424 508.2 L425 508.2 L426 508.2 L427 508.2 L428 508.2 L429 508.2 L430 508.2 L431 508.2 L432 508.2 L433 508.2 L434 508.2 L435 508.2 L436 508.2 L437 508.2 L438 508.2 L439 508.2 L440 508.2 L441 508.2 L442 508.2 L443 499.7 L444 496.5 L445 499.7 L446 499.7 L447 500.5 L448 500.5 L449 502.4 L450 502.0 L451 502.4 L452 502.5 L453 502.7 L454 503.7 L455 504.3 L456 505.0 L457 505.9 L458 506.9 L459 507.0 L460 507.0 L461 507.4 L462 506.9 L463 505.9 L464 499.9 L465 499.9 L466 496.5 L467 501.1 L468 498.0 L469 501.1 L470 498.0 L471 501.5 L472 502.7 L473 502.8 L474 504.4 L475 505.9 L476 506.3 L477 506.3 L478 506.7 L479 506.3 L480 500.3 L481 500.2 L482 499.6 L483 500.2 L484 501.2 L485 504.2 L486 501.2 L487 501.2 L488 501.1 L489 501.1 L490 499.6 L491 498.7 L492 498.0 L493 496.5 L494 495.7 L495 496.5 L496 497.1 L497 498.8 L498 499.6 L499 499.9 L500 499.9 L501 499.9 L502 502.3 L503 502.3 L504 502.3 L505 503.1 L506 500.9 L507 500.9 L508 500.9 L509 500.9 L510 502.3 L511 499.8 L512 499.8 L513 499.6 L514 498.7 L515 498.0 L516 498.0 L517 499.9 L518 500.4 L519 500.7 L520 501.2 L521 501.9 L522 501.9 L523 502.0 L524 503.9 L525 505.5 L526 504.3 L527 504.3 L528 504.3 L529 504.7 L530 504.7 L531 504.8 L532 504.8 L533 505.5 L534 503.2 L535 503.2 L536 502.9 L537 502.7 L538 502.1 L539 502.0 L540 496.5 L541 493.7 L542 496.5 L543 496.5 L544 500.6 L545 496.6 L546 500.6 L547 498.0 L548 501.0 L549 498.0 L550 498.0 L551 498.0 L552 497.9 L553 498.8 L554 498.8 L555 500.4 L556 502.5 L557 500.6 L558 500.6 L559 500.6 L560 501.2 L561 501.2 L562 502.2 L563 501.2 L564 499.6 L565 499.6 L566 499.5 L567 499.6 L568 499.6 L569 500.3 L570 500.4 L571 500.4 L572 503.3 L573 500.4 L574 497.3 L575 495.9 L576 492.7 L577 495.9 L578 498.0 L579 501.3 L580 498.0 L581 498.0 L582 498.0 L583 497.0 L584 498.0 L585 496.0 L586 498.0 L587 498.0 L588 498.0 L589 501.5 L590 501.0 L591 501.2 L592 501.2 L593 502.2 L594 502.7 L595 503.1 L596 503.1 L597 503.5 L598 503.1 L599 503.0 L600 500.0 L601 499.2 L602 500.0 L603 499.2 L604 501.2 L605 501.2 L606 503.9 L607 501.2 L608 501.2 L609 500.6 L610 500.2 L611 499.6 L612 500.2 L613 496.5 L614 498.8 L615 498.8 L616 499.6 L617 501.0 L618 502.0 L619 502.7 L620 503.5 L621 505.1 L622 506.4 L623 506.3 L624 506.3 L625 505.9 L626 505.9 L627 501.5 L628 501.5 L629 502.0 L630 503.2 L631 503.5 L632 504.3 L633 504.7 L634 505.1 L635 506.6 L636 506.0 L637 506.0 L638 506.0 L639 505.5 L640 506.0 L641 505.6 L642 506.3 L643 506.3 L644 506.3 L645 506.4 L646 506.7 L647 507.4 L648 506.8 L649 506.9 L650 506.9 L651 507.0 L652 507.6 L653 507.6 L654 508.2 L655 508.2 L656 508.2 L657 508.2 L658 508.2 L659 508.2 L660 508.2 L661 508.2 L662 508.2 L663 508.2 L664 508.2 L665 508.2 L666 508.2 L667 508.2 L668 499.1 L669 499.1 L670 499.6 L671 499.6 L672 501.0 L673 501.0 L674 501.2 L675 501.2 L676 501.3 L677 501.3 L678 503.5 L679 500.4 L680 501.5 L681 498.8 L682 501.5 L683 500.6 L684 500.6 L685 499.7 L686 499.7 L687 497.0 L688 499.6 L689 498.0 L690 499.6 L691 499.6 L692 499.6 L693 499.6 L694 502.5 L695 500.4 L696 502.5 L697 500.4 L698 503.7 L699 503.7 L700 504.4 L701 505.1 L702 506.1 L703 506.7 L704 507.0 L705 506.7 L706 506.7 L707 505.2 L708 499.6 L709 499.6 L710 498.0 L711 501.5 L712 501.3 L713 501.5 L714 501.3 L715 502.6 L716 502.6 L717 502.6 L718 502.7 L719 501.9 L720 501.1 L721 499.6 L722 499.6 L723 503.2 L724 503.5 L725 505.9 L726 506.2 L727 505.9 L728 505.9 L729 505.9 L730 501.2 L731 501.0 L732 501.0 L733 504.3 L734 505.7 L735 505.7 L736 506.7 L737 505.7 L738 501.7 L739 499.5 L740 499.2 L741 499.5 L742 499.6 L743 502.6 L744 499.6 L745 502.6 L746 501.2 L747 503.5 L748 501.2 L749 501.2 L750 497.7 L751 497.7 L752 494.9 L753 500.2 L754 498.8 L755 500.2 L756 498.8 L757 502.8 L758 501.4 L759 501.4 L760 501.2 L761 501.3 L762 501.2 L763 501.3 L764 499.6 L765 501.3 L766 501.2 L767 504.2 L768 501.7 L769 502.0 L770 502.0 L771 502.4 L772 502.7 L773 502.9 L774 505.2 L775 505.3 L776 505.2 L777 505.2 L778 502.0 L779 499.5 L780 495.7 L781 497.4 L782 495.7 L783 497.4 L784 495.9 L785 497.4 L786 498.0 L787 498.7 L788 498.7 L789 499.6 L790 499.6 L791 501.1 L792 497.3 L793 501.1 L794 498.8 L795 502.0 L796 500.8 L797 501.1 L798 500.8 L799 501.1 L800 501.1 L801 503.2 L802 500.6 L803 502.6 L804 502.0 L805 502.6 L806 502.7 L807 502.8 L808 502.7 L809 502.7 L810 502.0 L811 500.6 L812 501.0 L813 501.0 L814 501.2 L815 501.9 L816 502.7 L817 503.1 L818 503.5 L819 504.3 L820 506.1 L821 504.3 L822 504.3 L823 501.7 L824 498.2 L825 498.2 L826 498.2 L827 499.2 L828 495.7 L829 496.2 L830 496.2 L831 498.0 L832 498.0 L833 499.9 L834 498.0 L835 499.6 L836 498.7 L837 499.6 L838 499.6 L839 499.6 L840 503.3 L841 502.0 L842 503.3 L843 502.0 L844 504.4 L845 502.6 L846 502.9 L847 502.6 L848 502.9 L849 502.7 L850 502.7 L851 502.7 L852 502.3 L853 501.4 L854 499.6 L855 501.4 L856 500.4 L857 500.7 L858 500.7 L859 501.2 L860 502.0 L861 502.1 L862 502.7 L863 502.8 L864 503.5 L865 504.4 L866 503.5 L867 503.5 L868 502.5 L869 498.8 L870 498.8 L871 498.8 L872 500.6 L873 501.2 L874 501.9 L875 502.7 L876 503.5 L877 503.5 L878 504.4 L879 505.1 L880 505.7 L881 505.9 L882 506.7 L883 507.2 L884 506.7 L885 506.7 L886 501.0 L887 494.9 L888 494.9 L889 500.5 L890 502.0 L891 503.5 L892 505.0 L893 505.0 L894 506.1 L895 504.3 L896 504.3 L897 502.7 L898 501.2 L899 495.9 L900 495.9 L901 498.0 L902 501.0 L903 502.7 L904 503.9 L905 505.1 L906 505.6 L907 505.9 L908 506.7 L909 506.9 L910 506.7 L911 506.7 L912 506.7 L913 506.8 L914 507.4 L915 507.7 L916 508.0 L917 508.2 L918 508.2 L919 508.2 L920 508.2 L921 508.2 L922 508.2 L923 508.2 L924 508.2 L925 508.2 L926 508.2 L927 502.8 L928 499.6 L929 502.8 L930 499.6 L931 501.2 L932 501.2 L933 502.7 L934 503.5 L935 502.7 L936 503.5 L937 503.9 L938 505.1 L939 505.9 L940 506.3 L941 506.7 L942 507.2 L943 507.2 L944 507.4 L945 507.8 L946 508.0 L947 508.1 L948 508.1 L949 508.2 L950 508.1 L951 508.0 L952 508.0 L953 508.0 L954 508.2 L955 508.2 L956 508.2 L957 508.2 L958 508.2 L959 508.2 L960 508.2 L961 508.2 L962 508.2 L963 508.2 L964 508.2 L965 508.2 L966 497.8 L967 496.5 L968 497.8 L969 497.8 L970 499.7 L971 498.8 L972 499.7 L973 501.2 L974 503.2 L975 501.2 L976 501.2 L977 500.2 L978 500.2 L979 501.2 L980 502.7 L981 503.5 L982 505.1 L983 506.1 L984 506.1 L985 506.3 L986 506.3 L987 506.6 L988 506.7 L989 506.7 L990 506.7 L991 506.6 L992 504.2 L993 500.0 L994 498.8 L995 500.0 L996 501.2 L997 502.0 L998 502.0 L999 503.2 L1000 503.2 L1001 503.5 L1002 504.4 L1003 505.2 L1004 505.9 L1005 507.2 L1006 507.2 L1007 507.5 L1008 507.2 L1009 506.9 L1010 506.9 L1011 507.0 L1012 507.1 L1013 507.2 L1014 507.3 L1015 507.3 L1016 507.4 L1017 507.3 L1018 500.3 L1019 500.2 L1020 498.2 L1021 500.2 L1022 498.0 L1023 498.0 L1024 498.0 L1024 508.2Z" fill="#0b79fb"/></svg><div style="left:0px;top:508.2px;width:1024px;height:9.5px;background:#6f6f6f;"></div><div style="left:-4px;top:509.7px;width:214.8px;height:7px;background:#e2e3e7;border-radius:3.5px;"></div><div style="left:0px;top:517.7px;width:1024px;height:11.3px;background:#f0f0f2;"></div><div style="left:0px;top:517.7px;width:1024px;height:0.8px;background:#dededf;"></div></div></body></html>
